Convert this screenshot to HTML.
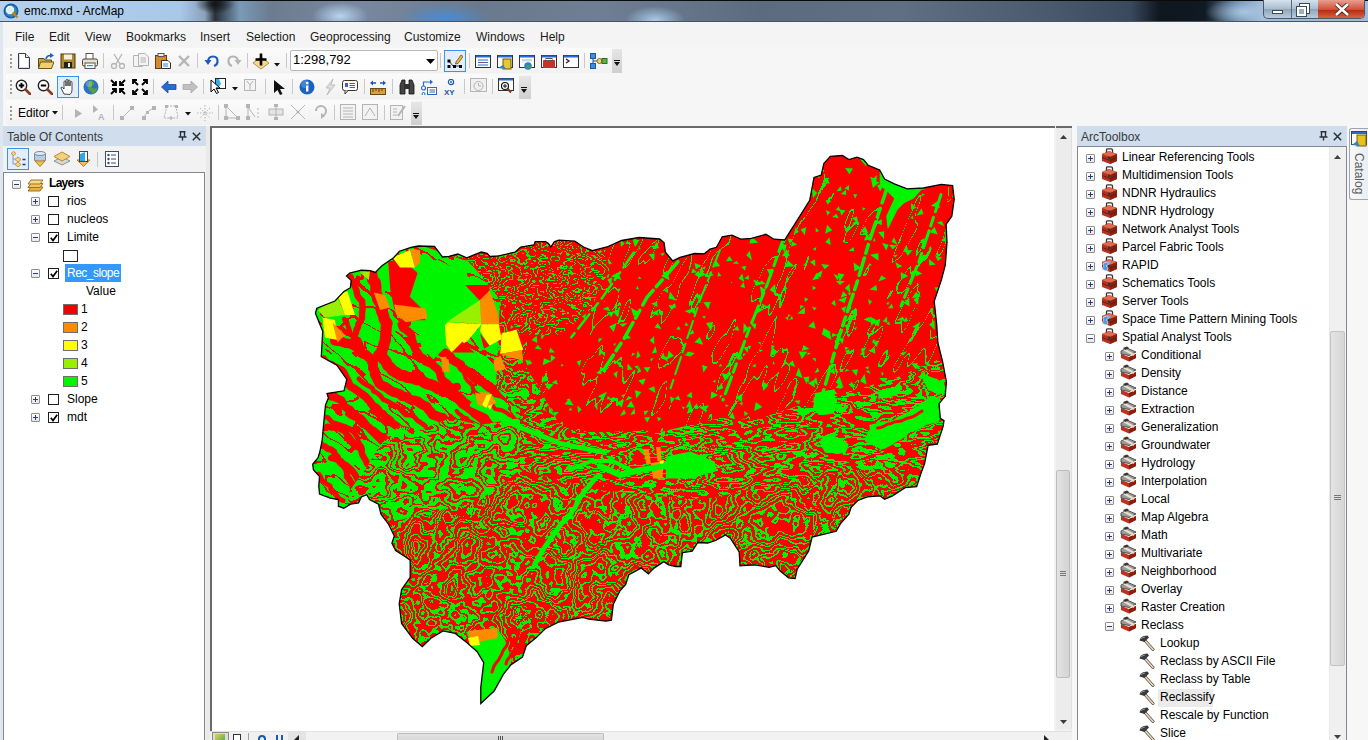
<!DOCTYPE html>
<html><head><meta charset="utf-8">
<style>
*{margin:0;padding:0;box-sizing:border-box}
html,body{width:1368px;height:740px;overflow:hidden}
body{position:relative;background:#f0f0f0;font-family:"Liberation Sans",sans-serif;font-size:12px;color:#000}
.a{position:absolute}
.t{position:absolute;white-space:pre;line-height:14px}
#title{left:0;top:0;width:1368px;height:22px;
background:
radial-gradient(ellipse 40px 14px at 1245px 12px,#a8c4e0 0%,rgba(168,196,224,0) 100%),
radial-gradient(ellipse 28px 14px at 340px 16px,#b8d4ee 0%,rgba(184,212,238,0) 100%),
radial-gradient(ellipse 30px 14px at 655px 20px,#a8c8e8 0%,rgba(168,200,232,0) 100%),
radial-gradient(ellipse 45px 14px at 445px 18px,#4a8ad0 0%,rgba(74,138,208,0) 100%),
radial-gradient(ellipse 20px 10px at 215px 4px,#101418 0%,rgba(16,20,24,0) 100%),
linear-gradient(90deg,#b4d2ee 0px,#a8c8e8 180px,#8aa2bc 205px,#2a3038 215px,#7a9ab8 240px,#6c7c90 270px,#7888a0 360px,#6a7a8e 480px,#6e7e94 600px,#5c6c80 760px,#607084 900px,#4a5a6e 1050px,#3a4a5e 1130px,#0e161e 1160px,#101a24 1205px,#6a8aaa 1240px,#a0bcd8 1262px);}
#title:before{content:"";position:absolute;left:0;top:0;width:1368px;height:1px;background:#0a0a0a}
#title:after{content:"";position:absolute;left:0;top:21px;width:1368px;height:1px;background:#4a5460}
.menu span{position:absolute;top:30px;color:#1a1a1a}
.tb{position:absolute;height:25px;background:linear-gradient(#fbfbfb,#f1f1f1);border-radius:2px}
.grip{position:absolute;left:4px;top:6px;width:2px;height:14px;background:repeating-linear-gradient(#9a9a9a 0 2px,transparent 2px 4px)}
.sep{position:absolute;top:6px;width:1px;height:15px;background:#c8c8c8}
.ov{position:absolute;width:9px;height:22px;background:linear-gradient(#e6e6e6,#cfcfcf)}
.ov:after{content:"";position:absolute;left:2px;top:13px;width:0;height:0;border-left:3px solid transparent;border-right:3px solid transparent;border-top:4px solid #111}
.ov:before{content:"";position:absolute;left:2px;top:11px;width:6px;height:1px;background:#111}
.hdr{position:absolute;height:20px;background:#d0ddec}
.hdr .t{top:4px;color:#3a3a3a}
.row .t{color:#000}
.pm{position:absolute;width:9px;height:9px;border:1px solid #8f8f8f;background:linear-gradient(#fff,#e6e6e6);border-radius:1px}
.pm:before{content:"";position:absolute;left:1px;top:3px;width:5px;height:1px;background:#2a3a7a}
.pm.p:after{content:"";position:absolute;left:3px;top:1px;width:1px;height:5px;background:#2a3a7a}
.cb{position:absolute;width:11px;height:11px;border:1px solid #1e1e1e;background:#fff}
.cb.ck:after{content:"";position:absolute;left:1px;top:0px;width:7px;height:8px;background:none;border:none}
.sw{position:absolute;width:15px;height:11px;border:1px solid #6e6e6e}
</style></head><body>

<!-- title bar -->
<div id="title" class="a">
 <svg class="a" style="left:3px;top:3px" width="17" height="17" viewBox="0 0 17 17">
  <circle cx="8" cy="8" r="7.5" fill="#1c5a9a"/>
  <circle cx="8" cy="8" r="6" fill="#2e86c8"/>
  <path d="M3 5 Q6 3 8 6 Q10 9 13 7 L13 11 Q9 13 6 10 Z" fill="#3aa04a"/>
  <circle cx="7" cy="7" r="3.6" fill="#d8eefc" stroke="#f4f4f4" stroke-width="1.2"/>
  <line x1="9.6" y1="9.6" x2="14.5" y2="14.5" stroke="#d0782a" stroke-width="2.2"/>
 </svg>
 <span class="t" style="left:24px;top:4px;color:#000">emc.mxd - ArcMap</span>
 <!-- window buttons -->
 <div class="a" style="left:1263px;top:0;width:102px;height:19px;border:1px solid #4a5868;border-top:none;border-radius:0 0 5px 5px;overflow:hidden;background:linear-gradient(#d6e2ee,#a8bccc 50%,#8ea4b8 51%,#b8ccdc)">
  <div class="a" style="left:27px;top:0;width:1px;height:19px;background:#5a6a7a"></div>
  <div class="a" style="left:54px;top:0;width:47px;height:19px;background:linear-gradient(#e8a090,#d0503a 50%,#b8280e 51%,#d86a4a)"></div>
  <div class="a" style="left:8px;top:10px;width:11px;height:4px;background:#fff;border:1px solid #3a4a5a"></div>
  <div class="a" style="left:36px;top:4px;width:9px;height:9px;border:2px solid #fff;outline:1px solid #3a4a5a"></div>
  <div class="a" style="left:33px;top:7px;width:9px;height:9px;border:2px solid #fff;outline:1px solid #3a4a5a;background:#9ab0c4"></div>
  <svg class="a" style="left:70px;top:3px" width="16" height="13" viewBox="0 0 16 13"><path d="M2 1 L14 12 M14 1 L2 12" stroke="#3a2018" stroke-width="4.2"/><path d="M2 1 L14 12 M14 1 L2 12" stroke="#fff" stroke-width="2.6"/></svg>
 </div>
</div>

<!-- left window border -->
<div class="a" style="left:0;top:22px;width:3px;height:718px;background:#dfe6ee"></div>

<!-- menu bar -->
<div class="a menu" style="left:3px;top:22px;width:1365px;height:25px;background:#f4f4f4"></div>
<div class="menu">
 <span style="left:15px">File</span><span style="left:49px">Edit</span><span style="left:85px">View</span><span style="left:126px">Bookmarks</span><span style="left:200px">Insert</span><span style="left:246px">Selection</span><span style="left:310px">Geoprocessing</span><span style="left:404px">Customize</span><span style="left:476px">Windows</span><span style="left:540px">Help</span>
</div>

<!-- toolbar area background -->
<div class="a" style="left:3px;top:47px;width:1365px;height:79px;background:#f6f6f6"></div>

<!-- TOOLBARS_START -->
<div class="tb" style="left:6px;top:48px;width:607px"><div class="grip"></div></div>
<div class="ov" style="left:612px;top:49px;width:10px;height:24px"></div>
<svg class="a" style="left:16px;top:53px" width="16" height="16" viewBox="0 0 16 16"><path d="M2.5 0.5H9.5L13.5 4.5V15.5H2.5Z" fill="#fff" stroke="#3c3c3c"/><path d="M3.5 2 V14.5 H12.5 V6" fill="none" stroke="#cfe0f0"/><path d="M9.5 0.5V4.5H13.5" fill="#e8e8e8" stroke="#3c3c3c"/></svg>
<svg class="a" style="left:38px;top:53px" width="16" height="16" viewBox="0 0 16 16"><path d="M0.5 5.5H6L7 7H13.5V15.5H0.5Z" fill="#c9a640" stroke="#5a4a10"/><path d="M2.5 9H16L13.5 15.5H0.5Z" fill="#f0d070" stroke="#6a5a10"/><path d="M8 6 Q9 2 13 2.5" fill="none" stroke="#1a60c0" stroke-width="1.6"/><path d="M12 0L16 2.6L12 5Z" fill="#1a60c0"/></svg>
<svg class="a" style="left:60px;top:53px" width="16" height="16" viewBox="0 0 16 16"><rect x="1" y="1" width="14" height="14" fill="#b08a2a" stroke="#4a3a10"/><rect x="4" y="1.5" width="8" height="5" fill="#f4f0e0"/><rect x="4" y="9" width="8" height="6" fill="#222"/><rect x="8" y="10" width="2" height="4" fill="#eee"/></svg>
<svg class="a" style="left:82px;top:53px" width="16" height="16" viewBox="0 0 16 16"><rect x="4" y="0.5" width="7" height="6" fill="#fff" stroke="#555"/><rect x="0.5" y="6" width="15" height="7" rx="1.5" fill="#e8e0d0" stroke="#4a4030"/><rect x="3" y="10" width="10" height="5.5" fill="#fff" stroke="#555"/><rect x="5" y="12" width="6" height="1.2" fill="#3a8ae0"/></svg>
<div class="sep" style="left:103px;top:53px"></div>
<svg class="a" style="left:110px;top:53px" width="16" height="16" viewBox="0 0 16 16"><circle cx="4" cy="13" r="2.5" fill="none" stroke="#b4b4b4" stroke-width="1.3"/><circle cx="12" cy="13" r="2.5" fill="none" stroke="#b4b4b4" stroke-width="1.3"/><path d="M4 1L10 11M12 1L6 11" stroke="#b4b4b4" stroke-width="1.3"/></svg>
<svg class="a" style="left:133px;top:53px" width="16" height="16" viewBox="0 0 16 16"><path d="M0.5 2.5H7L9.5 5V13.5H0.5Z" fill="#f4f4f4" stroke="#b4b4b4"/><path d="M5.5 0.5H12L15.5 4V12.5H5.5Z" fill="#f4f4f4" stroke="#b4b4b4"/><path d="M7.5 5H13M7.5 7H13M7.5 9H13" stroke="#b4b4b4"/></svg>
<svg class="a" style="left:155px;top:53px" width="16" height="16" viewBox="0 0 16 16"><rect x="0.5" y="2.5" width="11" height="13" fill="#d48a30" stroke="#6a3a10"/><rect x="3" y="0.5" width="6" height="3" fill="#eee" stroke="#555"/><path d="M6.5 7.5H13L15.5 10V15.5H6.5Z" fill="#fff" stroke="#333"/><path d="M8 11H13M8 13H13" stroke="#3a80d0"/></svg>
<svg class="a" style="left:176px;top:53px" width="16" height="16" viewBox="0 0 16 16"><path d="M3 3L13 13M13 3L3 13" stroke="#b4b4b4" stroke-width="2.4"/></svg>
<div class="sep" style="left:197px;top:53px"></div>
<svg class="a" style="left:204px;top:53px" width="16" height="16" viewBox="0 0 16 16"><path d="M4 9 Q4 3.5 9 3.5 Q14 3.5 13.5 9 Q13 12 10 13" fill="none" stroke="#1c5cb8" stroke-width="2.2"/><path d="M0.5 7H7.5L4 12Z" fill="#1c5cb8"/></svg>
<svg class="a" style="left:226px;top:53px" width="16" height="16" viewBox="0 0 16 16"><path d="M12 9 Q12 3.5 7 3.5 Q2 3.5 2.5 9 Q3 12 6 13" fill="none" stroke="#b4b4b4" stroke-width="2.2"/><path d="M15.5 7H8.5L12 12Z" fill="#b4b4b4"/></svg>
<div class="sep" style="left:247px;top:53px"></div>
<svg class="a" style="left:253px;top:53px" width="16" height="17" viewBox="0 0 16 17"><path d="M8 4L16 10L8 16L0 10Z" fill="#f6d890" stroke="#c09040"/><path d="M8 0.5V12.5M2.5 6.5H13.5" stroke="#000" stroke-width="2.6"/></svg>
<svg class="a" style="left:274px;top:63px" width="6" height="4" viewBox="0 0 6 4"><path d="M0 0H6L3 3.5Z" fill="#111"/></svg>
<div class="sep" style="left:286px;top:53px"></div>
<div class="a" style="left:290px;top:50px;width:148px;height:21px;background:#fff;border:1px solid #b8b8b8;border-radius:2px"></div>
<span class="t" style="left:293px;top:53px;font-size:13px;color:#000">1:298,792</span>
<svg class="a" style="left:426px;top:59px" width="9" height="5" viewBox="0 0 9 5"><path d="M0 0H9L4.5 5Z" fill="#000"/></svg>
<div class="sep" style="left:440px;top:53px"></div>
<div class="a" style="left:444px;top:50px;width:22px;height:22px;background:#e2eefb;border:1px solid #3a94ee"></div>
<svg class="a" style="left:447px;top:53px" width="16" height="16" viewBox="0 0 16 16"><path d="M2 8L6 13H13" fill="none" stroke="#333" stroke-width="1"/><rect x="0.5" y="6.5" width="3" height="3" fill="#000"/><rect x="0.5" y="12" width="3" height="3" fill="#000"/><rect x="6" y="12" width="3" height="3" fill="#000"/><rect x="12" y="12" width="3" height="3" fill="#000"/><path d="M9 9L14 2L16 3.5L11 10.5L8.5 11Z" fill="#f0b840" stroke="#6a4a10" stroke-width="0.8"/></svg>
<div class="sep" style="left:469px;top:53px"></div>
<svg class="a" style="left:475px;top:54px" width="16" height="16" viewBox="0 0 16 16"><rect x="0.5" y="1.5" width="15" height="12" fill="#fff" stroke="#333"/><rect x="1" y="1.5" width="14" height="2" fill="#2a6ad0"/><path d="M3 6H13M3 8.5H13M3 11H13" stroke="#2a6ad0"/><path d="M6 8.5H8" stroke="#e03020"/></svg>
<svg class="a" style="left:497px;top:54px" width="16" height="16" viewBox="0 0 16 16"><rect x="0.5" y="1.5" width="15" height="12" fill="#fff" stroke="#333"/><rect x="1" y="1.5" width="14" height="2" fill="#2a6ad0"/><rect x="6" y="5" width="8" height="10" fill="#e8c830" stroke="#6a5a10"/><path d="M1 14L6 11L9 15Z" fill="#3a80c0"/></svg>
<svg class="a" style="left:519px;top:54px" width="16" height="16" viewBox="0 0 16 16"><rect x="0.5" y="1.5" width="15" height="12" fill="#fff" stroke="#333"/><rect x="1" y="1.5" width="14" height="2" fill="#2a6ad0"/><rect x="3" y="5" width="10" height="2.5" fill="#c8d8e8"/><circle cx="9" cy="12" r="3.8" fill="#2a80d0"/><path d="M7 10Q9 12 11 11L12 14Q9 15 7 13Z" fill="#4aa040"/></svg>
<svg class="a" style="left:541px;top:54px" width="16" height="16" viewBox="0 0 16 16"><rect x="0.5" y="1.5" width="15" height="12" fill="#fff" stroke="#333"/><rect x="1" y="1.5" width="14" height="2" fill="#2a6ad0"/><rect x="2" y="6" width="12" height="8" rx="1" fill="#c8302a"/><rect x="5" y="4.5" width="6" height="2" fill="none" stroke="#555"/></svg>
<svg class="a" style="left:563px;top:54px" width="16" height="16" viewBox="0 0 16 16"><rect x="0.5" y="1.5" width="15" height="12" fill="#fff" stroke="#333"/><rect x="1" y="1.5" width="14" height="2" fill="#2a6ad0"/><path d="M3 5L6 7L3 9" fill="none" stroke="#222" stroke-width="1.3"/></svg>
<div class="sep" style="left:584px;top:53px"></div>
<svg class="a" style="left:590px;top:53px" width="18" height="16" viewBox="0 0 18 16"><rect x="0.5" y="0.5" width="5" height="5" fill="#3a90e0" stroke="#1a5aa0"/><rect x="0.5" y="10.5" width="5" height="5" fill="#3a90e0" stroke="#1a5aa0"/><path d="M3 5.5V8H8M3 10.5V8" stroke="#1a5aa0" fill="none"/><circle cx="9.5" cy="8" r="2.5" fill="#f0d070" stroke="#8a6a20"/><rect x="12" y="5.5" width="5" height="5" fill="#60b040" stroke="#2a7020"/></svg>
<div class="tb" style="left:6px;top:74px;width:514px"><div class="grip"></div></div>
<div class="ov" style="left:519px;top:76px;width:12px;height:23px"></div>
<svg class="a" style="left:15px;top:79px" width="16" height="16" viewBox="0 0 16 16"><circle cx="6.5" cy="6.5" r="5.2" fill="#fff" stroke="#222" stroke-width="1.4"/><path d="M10.5 10.5L15 15" stroke="#8a3a20" stroke-width="2.6" stroke-linecap="round"/><path d="M3.8 6.5H9.2" stroke="#000" stroke-width="2"/><path d="M6.5 3.8V9.2" stroke="#000" stroke-width="2"/></svg>
<svg class="a" style="left:37px;top:79px" width="16" height="16" viewBox="0 0 16 16"><circle cx="6.5" cy="6.5" r="5.2" fill="#fff" stroke="#222" stroke-width="1.4"/><path d="M10.5 10.5L15 15" stroke="#8a3a20" stroke-width="2.6" stroke-linecap="round"/><path d="M3.8 6.5H9.2" stroke="#000" stroke-width="2"/></svg>
<div class="a" style="left:57px;top:76px;width:22px;height:22px;background:#e2eefb;border:1px solid #3a94ee"></div>
<svg class="a" style="left:60px;top:79px" width="16" height="16" viewBox="0 0 16 16"><path d="M4 15 L1 9 Q1 7.5 2.5 8.5 L4 10 V3 Q4 2 5 2 Q6 2 6 3 V7 V1.5 Q6 0.5 7 0.5 Q8 0.5 8 1.5 V7 V2 Q8 1 9 1 Q10 1 10 2 V7 V3.5 Q10 2.5 11 2.5 Q12 2.5 12 3.5 V11 Q12 14 10 15.5Z" fill="#fff" stroke="#333" stroke-width="0.9"/></svg>
<svg class="a" style="left:83px;top:79px" width="16" height="16" viewBox="0 0 16 16"><circle cx="8" cy="8" r="7.5" fill="#2a72c8"/><path d="M8 1Q12 3 11 6Q8 6 9 9Q12 10 14 9Q14 13 10 15Q8 12 6 11Q4 8 6 6Q5 3 8 1Z" fill="#5aa040"/><circle cx="6" cy="5" r="3" fill="#fff" opacity="0.25"/></svg>
<div class="sep" style="left:103px;top:79px"></div>
<svg class="a" style="left:110px;top:79px" width="16" height="16" viewBox="0 0 16 16"><path d="M1 1L6 6M6 2V6H2M15 1L10 6M10 2V6H14M1 15L6 10M6 14V10H2M15 15L10 10M10 14V10H14" stroke="#000" stroke-width="1.8" fill="none"/></svg>
<svg class="a" style="left:132px;top:79px" width="16" height="16" viewBox="0 0 16 16"><path d="M1 1L6 6M1 5V1H5M15 1L10 6M15 5V1H11M1 15L6 10M1 11V15H5M15 15L10 10M15 11V15H11" stroke="#000" stroke-width="1.8" fill="none"/></svg>
<div class="sep" style="left:153px;top:79px"></div>
<svg class="a" style="left:161px;top:79px" width="16" height="16" viewBox="0 0 16 16"><path d="M0.5 8L7 2V5.5H15V10.5H7V14Z" fill="#2a6ad0" stroke="#1a4a9a" stroke-width="0.8"/></svg>
<svg class="a" style="left:182px;top:79px" width="16" height="16" viewBox="0 0 16 16"><path d="M15.5 8L9 2V5.5H1V10.5H9V14Z" fill="#c0c0c0" stroke="#a8a8a8" stroke-width="0.8"/></svg>
<div class="sep" style="left:203px;top:79px"></div>
<svg class="a" style="left:210px;top:78px" width="16" height="17" viewBox="0 0 16 17"><rect x="5.5" y="0.5" width="10" height="10" fill="#fff" stroke="#222"/><path d="M6 1H9L11 6L8 10H6Z" fill="#30b0f0"/><path d="M1 2L1 14L4 11L6.5 15.5L8.5 14.5L6 10H10Z" fill="#fff" stroke="#000"/></svg>
<svg class="a" style="left:232px;top:87px" width="6" height="4" viewBox="0 0 6 4"><path d="M0 0H6L3 3.5Z" fill="#111"/></svg>
<svg class="a" style="left:243px;top:78px" width="16" height="16" viewBox="0 0 16 16"><rect x="1.5" y="1.5" width="11" height="11" fill="#f4f4f4" stroke="#b4b4b4"/><path d="M4 3L7 7L10 3M7 7V12" fill="none" stroke="#b4b4b4"/></svg>
<div class="sep" style="left:265px;top:79px"></div>
<svg class="a" style="left:272px;top:79px" width="16" height="16" viewBox="0 0 16 16"><path d="M2 1L2 14L5.5 11L8 16L10.5 15L8 10H13Z" fill="#111"/></svg>
<div class="sep" style="left:292px;top:79px"></div>
<svg class="a" style="left:299px;top:79px" width="16" height="16" viewBox="0 0 16 16"><circle cx="8" cy="8" r="7.5" fill="#1e62c0"/><circle cx="6" cy="5" r="4" fill="#5a9ae8" opacity="0.6"/><rect x="7" y="6.5" width="2.4" height="6" fill="#fff"/><circle cx="8.2" cy="4" r="1.3" fill="#fff"/></svg>
<svg class="a" style="left:322px;top:79px" width="16" height="16" viewBox="0 0 16 16"><path d="M11 0L4 9H8L5 16L13 6H9Z" fill="#e0e0e0" stroke="#b4b4b4" stroke-width="0.8"/></svg>
<svg class="a" style="left:342px;top:79px" width="16" height="16" viewBox="0 0 16 16"><rect x="0.5" y="1.5" width="15" height="10" rx="2" fill="#fff" stroke="#333"/><path d="M3 11.5L3 15L6 11.5" fill="#fff" stroke="#333"/><rect x="3" y="4" width="3" height="4" fill="#2a6ad0"/><path d="M7.5 4.5H13M7.5 6.5H13M7.5 8.5H13" stroke="#2a6ad0"/></svg>
<div class="sep" style="left:364px;top:79px"></div>
<svg class="a" style="left:370px;top:79px" width="16" height="16" viewBox="0 0 16 16"><rect x="0.5" y="9.5" width="15" height="6" fill="#d8a040" stroke="#6a4a10"/><path d="M3 10V13M6 10V12M9 10V13M12 10V12" stroke="#5a3a10"/><path d="M1 4H6M10 4H15" stroke="#1a5ab0" stroke-width="1.6"/><path d="M0 4L3 1.5V6.5Z M16 4L13 1.5V6.5Z" fill="#1a5ab0"/></svg>
<div class="sep" style="left:392px;top:79px"></div>
<svg class="a" style="left:399px;top:79px" width="16" height="16" viewBox="0 0 16 16"><path d="M1 15V6L3 1H6V15Z M10 15V1H13L15 6V15Z" fill="#444" stroke="#111" stroke-width="0.8"/><rect x="6" y="5" width="4" height="5" fill="#333"/></svg>
<svg class="a" style="left:421px;top:79px" width="16" height="16" viewBox="0 0 16 16"><circle cx="2.5" cy="9" r="2" fill="#fff" stroke="#2a6ad0" stroke-width="1.2"/><circle cx="2.5" cy="15" r="1.5" fill="#fff" stroke="#2a6ad0"/><path d="M2.5 7V3H9" fill="none" stroke="#2a6ad0" stroke-width="1.2"/><path d="M9 0.5L12 3L9 5.5Z" fill="#2a6ad0"/><rect x="6.5" y="8.5" width="9" height="7" fill="#fff" stroke="#2a6ad0"/><path d="M8.5 11H14M8.5 13H14" stroke="#2a6ad0"/></svg>
<svg class="a" style="left:444px;top:79px" width="16" height="16" viewBox="0 0 16 16"><circle cx="7" cy="3" r="2.6" fill="none" stroke="#1a5ab0" stroke-width="1.2"/><circle cx="7" cy="3" r="0.9" fill="#1a5ab0"/><text x="0" y="15.5" font-family="Liberation Sans" font-weight="bold" font-size="8" fill="#1a5ab0">XY</text></svg>
<div class="sep" style="left:464px;top:79px"></div>
<svg class="a" style="left:470px;top:78px" width="17" height="16" viewBox="0 0 17 16"><rect x="0.5" y="0.5" width="16" height="13" fill="#f0f0f0" stroke="#b4b4b4"/><circle cx="8.5" cy="8" r="4.5" fill="none" stroke="#b4b4b4"/><path d="M8.5 5V8H11" stroke="#b4b4b4" fill="none"/></svg>
<div class="sep" style="left:492px;top:79px"></div>
<svg class="a" style="left:498px;top:78px" width="16" height="16" viewBox="0 0 16 16"><rect x="0.5" y="0.5" width="15" height="12" fill="#fff" stroke="#333"/><rect x="1" y="0.5" width="14" height="2" fill="#2a6ad0"/><circle cx="7" cy="8" r="3.5" fill="#fff" stroke="#111" stroke-width="1.2"/><path d="M5 8H9M7 6V10" stroke="#111"/><path d="M9.5 10.5L13 14.5" stroke="#8a3a20" stroke-width="2"/></svg>
<div class="tb" style="left:6px;top:100px;width:406px"><div class="grip"></div></div>
<div class="ov" style="left:411px;top:102px;width:11px;height:23px"></div>
<span class="t" style="left:18px;top:106px;color:#000">Editor</span>
<svg class="a" style="left:52px;top:111px" width="6" height="4" viewBox="0 0 6 4"><path d="M0 0H6L3 3.5Z" fill="#111"/></svg>
<div class="sep" style="left:62px;top:105px"></div>
<svg class="a" style="left:72px;top:105px" width="16" height="16" viewBox="0 0 16 16"><path d="M3 4V13L10 8.5Z" fill="#b4b4b4"/></svg>
<svg class="a" style="left:91px;top:104px" width="16" height="16" viewBox="0 0 16 16"><path d="M2 1V9L7 5.5Z" fill="#b4b4b4"/><text x="7" y="16" font-family="Liberation Sans" font-size="9" font-weight="bold" fill="#b4b4b4">A</text></svg>
<div class="sep" style="left:113px;top:105px"></div>
<svg class="a" style="left:119px;top:105px" width="16" height="16" viewBox="0 0 16 16"><path d="M3 13L13 3" stroke="#b4b4b4"/><rect x="1" y="11" width="4" height="4" fill="#b4b4b4"/><rect x="11" y="1" width="4" height="4" fill="#b4b4b4"/></svg>
<svg class="a" style="left:141px;top:105px" width="16" height="16" viewBox="0 0 16 16"><path d="M3 13Q5 6 13 3" stroke="#b4b4b4" fill="none"/><rect x="1" y="11" width="4" height="4" fill="#b4b4b4"/><rect x="11" y="1" width="4" height="4" fill="#b4b4b4"/><rect x="5" y="6" width="3" height="3" fill="#b4b4b4"/></svg>
<svg class="a" style="left:163px;top:104px" width="16" height="16" viewBox="0 0 16 16"><path d="M4 2H13L15 14H1Z" fill="none" stroke="#b4b4b4" stroke-dasharray="2 1"/><rect x="2" y="1" width="3" height="3" fill="#b4b4b4"/><rect x="12" y="1" width="3" height="3" fill="#b4b4b4"/><path d="M8 12V16M6 14H10" stroke="#b4b4b4"/></svg>
<svg class="a" style="left:185px;top:112px" width="6" height="4" viewBox="0 0 6 4"><path d="M0 0H6L3 3.5Z" fill="#111"/></svg>
<svg class="a" style="left:197px;top:105px" width="16" height="16" viewBox="0 0 16 16"><path d="M8 0V16M0 8H16M3 3L13 13M13 3L3 13" stroke="#b4b4b4" stroke-dasharray="1.5 1.5"/></svg>
<div class="sep" style="left:218px;top:105px"></div>
<svg class="a" style="left:224px;top:104px" width="16" height="16" viewBox="0 0 16 16"><path d="M2 2L14 14H2Z" fill="none" stroke="#b4b4b4"/><rect x="0" y="0" width="4" height="4" fill="#b4b4b4"/><rect x="12" y="12" width="4" height="4" fill="#b4b4b4"/><rect x="0" y="12" width="4" height="4" fill="#b4b4b4"/></svg>
<svg class="a" style="left:246px;top:104px" width="16" height="16" viewBox="0 0 16 16"><path d="M2 1V15M2 3L9 13" fill="none" stroke="#b4b4b4"/><rect x="0" y="0" width="4" height="4" fill="#b4b4b4"/><rect x="0" y="12" width="4" height="4" fill="#b4b4b4"/><path d="M12 4V16" stroke="#b4b4b4" stroke-dasharray="2 2"/></svg>
<svg class="a" style="left:268px;top:104px" width="16" height="16" viewBox="0 0 16 16"><rect x="1" y="5" width="14" height="6" fill="#e4e4e4" stroke="#b4b4b4"/><path d="M8 0V16" stroke="#b4b4b4"/><rect x="6" y="0" width="4" height="3" fill="#b4b4b4"/><rect x="6" y="13" width="4" height="3" fill="#b4b4b4"/></svg>
<svg class="a" style="left:290px;top:104px" width="16" height="16" viewBox="0 0 16 16"><path d="M1 1L15 15M15 1L1 15" stroke="#b4b4b4"/><circle cx="8" cy="8" r="1.5" fill="#b4b4b4"/></svg>
<svg class="a" style="left:313px;top:104px" width="16" height="16" viewBox="0 0 16 16"><path d="M3 7A5 5 0 1 1 8 12" fill="none" stroke="#b4b4b4" stroke-width="2"/><path d="M8 9V15L12 12Z" fill="#b4b4b4"/></svg>
<div class="sep" style="left:334px;top:105px"></div>
<svg class="a" style="left:340px;top:104px" width="16" height="16" viewBox="0 0 16 16"><rect x="0.5" y="0.5" width="15" height="15" fill="#f2f2f2" stroke="#b4b4b4"/><path d="M3 4H13M3 7H13M3 10H13M3 13H13" stroke="#b4b4b4"/></svg>
<svg class="a" style="left:362px;top:104px" width="16" height="16" viewBox="0 0 16 16"><rect x="0.5" y="0.5" width="15" height="15" fill="#f2f2f2" stroke="#b4b4b4"/><path d="M3 12L8 4L13 12" fill="none" stroke="#b4b4b4"/></svg>
<div class="sep" style="left:384px;top:105px"></div>
<svg class="a" style="left:390px;top:104px" width="16" height="16" viewBox="0 0 16 16"><rect x="0.5" y="1.5" width="12" height="14" fill="#f2f2f2" stroke="#b4b4b4"/><path d="M3 5H7M3 8H7M3 11H7" stroke="#b4b4b4"/><path d="M8 12L15 2" stroke="#b4b4b4" stroke-width="2"/></svg>
<!-- TOOLBARS_END -->

<!-- TOC panel -->
<div class="hdr" style="left:3px;top:126px;width:203px"><span class="t" style="left:4px">Table Of Contents</span></div>
<div class="a" style="left:3px;top:146px;width:203px;height:26px;background:#f2f2f2"></div>
<div class="a" style="left:3px;top:172px;width:202px;height:568px;background:#fff;border:1px solid #828790;border-bottom:none"></div>
<div class="a" style="left:206px;top:126px;width:4px;height:614px;background:#eaeaea"></div>

<!-- TOC_START -->
<!-- TOC toolbar -->
<div class="a" style="left:7px;top:148px;width:22px;height:22px;background:#e2eefb;border:1px solid #3a94ee"></div>
<svg class="a" style="left:10px;top:151px" width="17" height="16" viewBox="0 0 17 16"><path d="M3 4V13H6M3 8H6" fill="none" stroke="#8a9ab0"/><path d="M3.5 0.5L6 2.5L3.5 4.5L1 2.5Z" fill="#f4d48a" stroke="#c8983a"/><path d="M8 6L11 8.5L8 11L5 8.5Z" fill="#f4d48a" stroke="#c8983a"/><path d="M8 11L11 13.5L8 16L5 13.5Z" fill="#f4d48a" stroke="#c8983a"/><path d="M12.5 8.5H15.5M12.5 13.5H15.5" stroke="#1a3a8a" stroke-width="1.5"/></svg>
<svg class="a" style="left:33px;top:151px" width="14" height="16" viewBox="0 0 14 16"><path d="M1.5 2.5V9.5Q7 12 12.5 9.5V2.5" fill="#b8cce0" stroke="#7a8aa0"/><ellipse cx="7" cy="2.5" rx="5.5" ry="2" fill="#dce8f4" stroke="#7a8aa0"/><path d="M2 10H12L7 15.5Z" fill="#f0c050" stroke="#b08020"/></svg>
<svg class="a" style="left:53px;top:151px" width="18" height="16" viewBox="0 0 18 16"><path d="M9 6L17 10L9 14L1 10Z" fill="#d8d8d8" stroke="#909090"/><path d="M9 1L17 5.5L9 10L1 5.5Z" fill="#f4d080" stroke="#b88a30"/></svg>
<svg class="a" style="left:75px;top:151px" width="17" height="16" viewBox="0 0 17 16"><path d="M2 9H15L8.5 15.5Z" fill="#f0c050" stroke="#b08020"/><rect x="4.5" y="0.5" width="8" height="10" fill="#fff" stroke="#444"/><path d="M5 3L10 1V10H5Z" fill="#30a8e8"/></svg>
<div class="a" style="left:97px;top:152px;width:1px;height:15px;background:#c8c8c8"></div>
<svg class="a" style="left:105px;top:151px" width="14" height="16" viewBox="0 0 14 16"><rect x="0.5" y="0.5" width="13" height="15" fill="#fff" stroke="#3a4a6a"/><circle cx="3.5" cy="4" r="1.2" fill="#3a4a6a"/><circle cx="3.5" cy="8" r="1.2" fill="#3a4a6a"/><circle cx="3.5" cy="12" r="1.2" fill="#3a4a6a"/><path d="M6 4H11M6 8H11M6 12H11" stroke="#3a4a6a"/></svg>
<!-- tree -->
<div class="pm" style="left:12px;top:180px"></div>
<svg class="a" style="left:27px;top:178px" width="17" height="14" viewBox="0 0 17 14"><path d="M4 9H16L13 13H1Z" fill="#e8b040" stroke="#a07020"/><path d="M4 5.5H16L13 9.5H1Z" fill="#f0c860" stroke="#a07020"/><path d="M4 2H16L13 6H1Z" fill="#f4d890" stroke="#a07020"/></svg>
<span class="t" style="left:49px;top:176px;font-weight:bold;letter-spacing:-0.7px">Layers</span>
<div class="pm p" style="left:31px;top:197px"></div><div class="cb" style="left:48px;top:196px"></div><span class="t" style="left:67px;top:194px">rios</span>
<div class="pm p" style="left:31px;top:215px"></div><div class="cb" style="left:48px;top:214px"></div><span class="t" style="left:67px;top:212px">nucleos</span>
<div class="pm" style="left:31px;top:233px"></div><div class="cb ck" style="left:48px;top:232px"><svg class="a" style="left:1px;top:1px" width="8" height="8" viewBox="0 0 8 8"><path d="M0.8 3.8L3 6.5L7.2 0.8" fill="none" stroke="#000" stroke-width="1.7"/></svg></div><span class="t" style="left:67px;top:230px">Limite</span>
<div class="a" style="left:63px;top:250px;width:15px;height:12px;border:1px solid #222;background:#fff"></div>
<div class="pm" style="left:31px;top:269px"></div><div class="cb ck" style="left:48px;top:268px"><svg class="a" style="left:1px;top:1px" width="8" height="8" viewBox="0 0 8 8"><path d="M0.8 3.8L3 6.5L7.2 0.8" fill="none" stroke="#000" stroke-width="1.7"/></svg></div>
<div class="a" style="left:65px;top:264px;width:56px;height:18px;background:#3399ff"></div><span class="t" style="left:67px;top:266px;color:#fff;letter-spacing:-0.5px">Rec_slope</span>
<span class="t" style="left:86px;top:284px">Value</span>
<div class="sw" style="left:63px;top:304px;background:#f40000"></div><span class="t" style="left:81px;top:302px">1</span>
<div class="sw" style="left:63px;top:322px;background:#ff8a00"></div><span class="t" style="left:81px;top:320px">2</span>
<div class="sw" style="left:63px;top:340px;background:#ffff00"></div><span class="t" style="left:81px;top:338px">3</span>
<div class="sw" style="left:63px;top:358px;background:#96f000"></div><span class="t" style="left:81px;top:356px">4</span>
<div class="sw" style="left:63px;top:376px;background:#00f500"></div><span class="t" style="left:81px;top:374px">5</span>
<div class="pm p" style="left:31px;top:395px"></div><div class="cb" style="left:48px;top:394px"></div><span class="t" style="left:67px;top:392px">Slope</span>
<div class="pm p" style="left:31px;top:413px"></div><div class="cb ck" style="left:48px;top:412px"><svg class="a" style="left:1px;top:1px" width="8" height="8" viewBox="0 0 8 8"><path d="M0.8 3.8L3 6.5L7.2 0.8" fill="none" stroke="#000" stroke-width="1.7"/></svg></div><span class="t" style="left:67px;top:410px">mdt</span>

<!-- TOC_END -->
<!-- map -->
<div class="a" style="left:210px;top:126px;width:845px;height:605px;background:#fff;border-left:2px solid #6a6a6a;border-top:2px solid #6a6a6a"></div>
<!-- MAP_START -->
<svg class="a" style="left:0;top:0" width="1368" height="740" viewBox="0 0 1368 740">
<defs>
<clipPath id="bd"><path d="M315.4 313.3 L316.8 308.2 L335.0 301.0 L343.9 291.4 L350.4 287.7 L351.2 280.4 L346.5 276.0 L349.7 273.0 L361.4 270.2 L370.2 270.6 L375.3 272.4 L381.9 265.8 L393.6 257.8 L399.4 251.2 L411.0 247.5 L418.4 246.0 L434.5 246.4 L442.5 257.0 L449.0 256.3 L457.9 254.0 L466.7 257.8 L481.3 252.0 L487.0 253.4 L490.0 256.5 L498.8 255.8 L514.9 252.2 L520.7 247.0 L533.9 244.9 L535.3 241.6 L545.6 241.6 L548.5 243.4 L550.7 247.0 L554.3 241.9 L558.7 240.2 L574.8 241.2 L583.6 247.0 L592.3 250.7 L607.0 247.0 L621.6 240.5 L639.1 237.5 L659.6 239.0 L664.0 242.7 L665.4 252.2 L672.7 260.9 L680.0 257.3 L694.6 253.5 L704.3 253.8 L710.0 249.2 L716.5 247.3 L722.2 236.8 L731.9 235.1 L740.8 239.2 L751.3 238.4 L765.9 234.3 L774.0 239.2 L784.6 240.0 L793.5 226.2 L809.7 200.3 L814.0 177.4 L821.3 175.0 L823.8 163.6 L830.3 156.3 L842.4 155.5 L848.9 159.6 L857.0 157.2 L863.5 159.6 L868.3 165.3 L879.7 170.1 L884.6 179.0 L894.3 183.9 L907.2 188.8 L923.5 188.0 L941.3 184.4 L952.6 185.5 L954.2 199.3 L951.8 216.3 L946.1 224.4 L947.0 242.2 L945.3 265.0 L941.5 279.5 L934.2 301.4 L936.6 323.3 L937.9 342.7 L942.7 362.2 L946.4 381.7 L945.2 396.3 L939.0 403.6 L940.3 418.2 L944.0 420.6 L943.0 426.9 L940.7 433.8 L937.3 444.1 L928.1 445.3 L924.6 463.6 L921.2 472.8 L916.6 486.6 L905.1 487.7 L892.5 495.8 L884.5 499.2 L879.9 495.8 L867.2 496.9 L858.1 500.3 L851.2 507.2 L848.9 514.1 L840.8 523.3 L836.2 531.3 L812.1 537.1 L808.7 550.9 L797.2 569.2 L795.1 578.6 L788.6 577.8 L780.5 571.3 L775.7 565.7 L769.2 567.3 L754.6 564.9 L740.0 565.7 L739.2 551.9 L730.3 538.1 L725.4 534.9 L715.7 540.5 L707.6 543.0 L697.8 542.5 L692.2 551.1 L682.4 552.7 L680.8 566.5 L675.9 566.5 L668.6 564.9 L663.8 561.6 L654.0 568.1 L648.4 573.8 L641.1 568.1 L628.9 574.6 L625.7 584.3 L620.0 590.8 L613.3 604.1 L611.4 620.2 L605.8 621.1 L588.7 619.2 L583.0 617.3 L558.4 622.1 L545.2 628.7 L535.7 638.1 L526.3 645.7 L522.5 657.1 L511.1 664.6 L503.5 674.1 L494.1 691.1 L480.8 703.4 L480.8 687.4 L483.7 662.7 L477.0 651.4 L472.3 647.6 L467.4 643.1 L455.2 633.4 L443.0 630.9 L430.9 638.2 L422.3 646.7 L412.6 638.2 L401.6 623.6 L399.2 604.1 L401.6 589.5 L410.2 577.4 L410.2 560.3 L405.3 556.7 L395.6 550.6 L391.9 543.3 L394.3 536.0 L388.3 523.8 L381.0 514.1 L378.5 504.3 L369.5 499.5 L366.8 494.7 L361.4 496.8 L358.6 502.8 L350.5 504.2 L343.8 508.2 L338.4 506.2 L338.4 499.5 L330.3 498.1 L319.5 494.0 L318.8 486.0 L319.5 476.5 L313.4 469.7 L312.7 464.3 L318.1 457.6 L320.1 450.8 L322.2 440.0 L324.1 419.1 L325.5 405.0 L328.4 397.9 L327.0 393.6 L344.0 390.8 L346.8 379.4 L336.9 365.2 L321.3 356.7 L322.7 331.2Z"/></clipPath>
<clipPath id="zw"><path d="M290 230 L420 245 L470 262 L496 280 L500 300 L496 387 L520 418 L480 425 L450 418 L420 430 L400 425 L380 445 L365 470 L350 490 L345 520 L290 520Z"/></clipPath>
<clipPath id="ze"><path d="M420 200 L980 140 L980 357 L940 358 L901 376 L865 387 L813 401 L755 420 L720 418 L690 425 L660 432 L640 430 L610 432 L578 432 L560 425 L540 390 L510 340 L500 300 L496 280 L470 262 L420 245Z"/></clipPath>
<clipPath id="zew"><path d="M440 230 L600 225 L610 270 L590 310 L560 335 L520 335 L500 300 L470 262 L440 250Z"/></clipPath>
<clipPath id="zsw"><path d="M290 380 L540 390 L560 425 L520 470 L480 500 L400 520 L290 520Z"/></clipPath>
<clipPath id="zm"><path d="M520 400 L548 412 L578 430 L640 430 L720 418 L813 401 L940 358 L980 357 L980 470 L850 470 L700 500 L600 490 L520 470Z"/></clipPath>
<filter id="fthin" filterUnits="userSpaceOnUse" x="-1400" y="-1400" width="2800" height="2800" color-interpolation-filters="sRGB">
<feTurbulence type="fractalNoise" baseFrequency="0.02" numOctaves="4" seed="11"/>
<feColorMatrix type="matrix" values="1 0 0 0 0  1 0 0 0 0  0 0 0 0 0  0 0 0 0 1"/>
<feComponentTransfer><feFuncR type="discrete" tableValues="1 0 1 1 0 1 1 0 1 0 1 1 0 1 1 0 1 0 1 1 0 1 1 0 1 0 1 1 0 1 1 0 1 0 1 1 0 1 1 0"/><feFuncG type="discrete" tableValues="0 0.96 0 0 0.96 0 0 0.96 0 0.96 0 0 0.96 0 0 0.96 0 0.96 0 0 0.96 0 0 0.96 0 0.96 0 0 0.96 0 0 0.96 0 0.96 0 0 0.96 0 0 0.96"/><feFuncB type="linear" slope="0" intercept="0"/><feFuncA type="linear" slope="0" intercept="1"/></feComponentTransfer>
</filter>
<filter id="fmid" filterUnits="userSpaceOnUse" x="-1400" y="-1400" width="2800" height="2800" color-interpolation-filters="sRGB">
<feTurbulence type="fractalNoise" baseFrequency="0.012 0.035" numOctaves="4" seed="13"/>
<feColorMatrix type="matrix" values="1 0 0 0 0  1 0 0 0 0  0 0 0 0 0  0 0 0 0 1"/>
<feComponentTransfer><feFuncR type="discrete" tableValues="1 0 1 1 0 1 0 1 1 0 1 0 1 1 0 1 0 1 1 0 1 0 1 1 0 1 0 1 1 0 1 0 1 1 0"/><feFuncG type="discrete" tableValues="0 0.96 0 0 0.96 0 0.96 0 0 0.96 0 0.96 0 0 0.96 0 0.96 0 0 0.96 0 0.96 0 0 0.96 0 0.96 0 0 0.96 0 0.96 0 0 0.96"/><feFuncB type="linear" slope="0" intercept="0"/><feFuncA type="linear" slope="0" intercept="1"/></feComponentTransfer>
</filter>
<filter id="fwest" filterUnits="userSpaceOnUse" x="-1400" y="-1400" width="2800" height="2800" color-interpolation-filters="sRGB">
<feTurbulence type="fractalNoise" baseFrequency="0.01 0.035" numOctaves="3" seed="21"/>
<feColorMatrix type="matrix" values="1 0 0 0 0  1 0 0 0 0  0 0 0 0 0  0 0 0 0 1"/>
<feComponentTransfer><feFuncR type="discrete" tableValues="1 0 0 1 0 0 1 0 0 1 0 0 1 0 0 1 0 0 1 0 0 1 0 0"/><feFuncG type="discrete" tableValues="0 0.96 0.96 0 0.96 0.96 0 0.96 0.96 0 0.96 0.96 0 0.96 0.96 0 0.96 0.96 0 0.96 0.96 0 0.96 0.96"/><feFuncB type="linear" slope="0" intercept="0"/><feFuncA type="linear" slope="0" intercept="1"/></feComponentTransfer>
</filter>
<filter id="fsw" filterUnits="userSpaceOnUse" x="-1400" y="-1400" width="2800" height="2800" color-interpolation-filters="sRGB">
<feTurbulence type="fractalNoise" baseFrequency="0.018 0.026" numOctaves="4" seed="17"/>
<feColorMatrix type="matrix" values="1 0 0 0 0  1 0 0 0 0  0 0 0 0 0  0 0 0 0 1"/>
<feComponentTransfer><feFuncR type="discrete" tableValues="1 0 1 0 0 1 0 1 0 0 1 0 1 0 0 1 0 1 0 0 1 0 1 0 0 1 0 1 0 0"/><feFuncG type="discrete" tableValues="0 0.96 0 0.96 0.96 0 0.96 0 0.96 0.96 0 0.96 0 0.96 0.96 0 0.96 0 0.96 0.96 0 0.96 0 0.96 0.96 0 0.96 0 0.96 0.96"/><feFuncB type="linear" slope="0" intercept="0"/><feFuncA type="linear" slope="0" intercept="1"/></feComponentTransfer>
</filter>
<filter id="fwg" filterUnits="userSpaceOnUse" x="-1400" y="-1400" width="2800" height="2800" color-interpolation-filters="sRGB">
<feTurbulence type="fractalNoise" baseFrequency="0.01 0.03" numOctaves="4" seed="29"/>
<feColorMatrix type="matrix" values="1 0 0 0 0  1 0 0 0 0  0 0 0 0 0  0 0 0 0 1"/>
<feComponentTransfer><feFuncR type="discrete" tableValues="0 0 0 1 0 0 0 0 0 0 1 0 0 0 0 0 0 1 0 0 0 0 0 0 1 0 0 0 0 0 0 1 0 0 0"/><feFuncG type="discrete" tableValues="0.96 0.96 0.96 0 0.96 0.96 0.96 0.96 0.96 0.96 0 0.96 0.96 0.96 0.96 0.96 0.96 0 0.96 0.96 0.96 0.96 0.96 0.96 0 0.96 0.96 0.96 0.96 0.96 0.96 0 0.96 0.96 0.96"/><feFuncB type="linear" slope="0" intercept="0"/><feFuncA type="linear" slope="0" intercept="1"/></feComponentTransfer>
</filter>
<filter id="few" filterUnits="userSpaceOnUse" x="-1400" y="-1400" width="2800" height="2800" color-interpolation-filters="sRGB">
<feTurbulence type="fractalNoise" baseFrequency="0.03 0.05" numOctaves="4" seed="31"/>
<feColorMatrix type="matrix" values="1 0 0 0 0  1 0 0 0 0  0 0 0 0 0  0 0 0 0 1"/>
<feComponentTransfer><feFuncR type="discrete" tableValues="1 0 1 1 1 0 1 1 1 0 1 1 1 0 1 1 1 0 1 1 1 0 1 1 1 0 1 1 1 0 1 1 1 0 1 1 1 0 1 1"/><feFuncG type="discrete" tableValues="0 0.96 0 0 0 0.96 0 0 0 0.96 0 0 0 0.96 0 0 0 0.96 0 0 0 0.96 0 0 0 0.96 0 0 0 0.96 0 0 0 0.96 0 0 0 0.96 0 0"/><feFuncB type="linear" slope="0" intercept="0"/><feFuncA type="linear" slope="0" intercept="1"/></feComponentTransfer>
</filter>
<filter id="fred" filterUnits="userSpaceOnUse" x="-1400" y="-1400" width="2800" height="2800" color-interpolation-filters="sRGB">
<feTurbulence type="fractalNoise" baseFrequency="0.012 0.05" numOctaves="3" seed="3"/>
<feColorMatrix type="matrix" values="1 0 0 0 0  1 0 0 0 0  0 0 0 0 0  0 0 0 0 1"/>
<feComponentTransfer><feFuncR type="discrete" tableValues="1 1 1 1 1 1 1 1 1 1 1 1 1 1 1 0 1 1 1 1 1 1 1 1 1 1 1 1 1 1 1 0 1 1 1 1 1 1 1 1 1 1 1 1 1 1 1 0"/><feFuncG type="discrete" tableValues="0 0 0 0 0 0 0 0 0 0 0 0 0 0 0 0.96 0 0 0 0 0 0 0 0 0 0 0 0 0 0 0 0.96 0 0 0 0 0 0 0 0 0 0 0 0 0 0 0 0.96"/><feFuncB type="linear" slope="0" intercept="0"/><feFuncA type="linear" slope="0" intercept="1"/></feComponentTransfer>
</filter>
</defs>
<g clip-path="url(#bd)">
<rect x="300" y="150" width="670" height="560" fill="#f00" filter="url(#fthin)"/>
<g clip-path="url(#zsw)"><rect x="300" y="150" width="670" height="560" fill="#f00" filter="url(#fsw)"/></g>
<g clip-path="url(#zm)"><rect x="300" y="150" width="670" height="560" fill="#f00" filter="url(#fmid)"/></g>
<g clip-path="url(#zw)"><g transform="rotate(35 420 330)"><rect x="150" y="50" width="560" height="560" fill="#0f0" filter="url(#fwg)"/></g></g>
<path d="M371.6 272.6 L372 276.3 L372.7 279.9 L375.3 282.5 L375.9 286.1 L375.8 289.3 L376 292.7 L377.2 295.9 L377.7 299.2 L379.5 302.2 L381.7 305.1 L381 309.1 L382.1 312.4 L383.6 315.6 L384.2 319.2 L386 322.3 L387.1 323.2 L386.2 326.4 L386.1 330 L385.8 333.5 L385.5 336.9 L385.3 340.4 L384.1 343.6 L383.3 346.9 L382 349.9 L381.6 353.4 L378.8 355.1 L381.5 357.1 L384 359.3 L386.2 361.9 L387.6 365.2 L390.2 367.4 L392.3 370.2 L395.1 371.9 L397.8 373.6 L400.6 375.4 L404.2 375.7 L407.1 377.2 L410.2 377.9 L413.6 377.6 L416.1 379.6 L419.3 379.8 L422.1 380.8 L424.6 382.6 L427.4 383.9 L430.4 384.5 L433.1 385.7 L435.9 387 L438.3 388.9 L441.6 388.9 L444.3 390.2 L447.4 390.6 L450.7 392 L453 394.4 L455.8 396.1 L458.5 398 L460.9 400.4 L463 403.2 L465.9 404.7 L468.5 406.7 L471.1 408.6 L473.7 410.6 L475.9 413.1 L478.6 414.9 L481.2 416.9 L483.8 418.8 L485.4 421.9 L487.4 424.3 L489.6 426.6 L492.1 428.5 L495 429.9 L497.4 432 L499.4 434.4 L503.9 433.9" fill="none" stroke="#ff0000" stroke-width="11.2" stroke-linejoin="round" stroke-linecap="round" clip-path="url(#zw)"/>
<path d="M334.8 340.8 L338.5 341.3 L342.2 341.8 L345.4 343.2 L349.1 343.5 L352.7 344.9 L355.5 346.5 L358 348.7 L360.3 351.2 L362.4 353.9 L365.8 354.7 L368.3 356.9 L371 359.3 L373.1 361.6 L373.1 364.9 L372.8 368.2 L374.8 370.7 L374.5 374 L376 376.7 L377.6 380.1 L379.2 383.3 L381.7 385.5 L385 386.6 L387.7 388.4 L390.3 390.4 L393.4 392 L396.7 392.9 L399.8 394 L402.2 396.3 L405.8 396.7 L408.5 398.5 L411.4 400 L415 400.4 L418.1 401.6 L420.7 403.6 L423.4 405.3 L426.6 406.5 L428.5 409.5 L430.9 412 L432.8 414.9 L436.2 415.9 L439.3 417.2 L442.8 418 L444.9 420.7 L447.9 422.1 L451 423.6 L453.5 425.6 L455.1 428.6 L456.9 431.3 L459.8 432.7 L463 433.8 L464.6 436.8 L466.9 438.9 L468.8 441.3 L472.1 441.2 L475.4 441.1 L478 442.7 L480.8 443.6 L483.8 444.4 L486.1 446.8 L488.6 448.3 L491.3 450.2 L494.7 449.9 L497.2 452 L500.6 451.7 L503.2 453.8 L506.2 454.6 L509.3 455.1 L511.8 457.5" fill="none" stroke="#ff0000" stroke-width="9.6" stroke-linejoin="round" stroke-linecap="round" clip-path="url(#zw)"/>
<path d="M323.4 359.5 L325.2 362.6 L328.3 364 L331.6 365 L334.2 367 L337.3 368.3 L341.3 370.1 L343.6 372.9 L345.2 376 L346.8 379.2 L348.4 382.3 L349 384.3 L351.1 387 L354.1 388.4 L356.7 390.3 L359.4 392.1 L362 394.1 L365 396.3 L367.2 398.6 L369.4 400.8 L371.2 403.6 L373.3 406 L376.2 407.6 L378.4 409.8 L379.5 412.9 L382.9 413.8 L384.9 416.6 L387.6 418.4 L390.2 420.3 L392.2 423.2 L395 424.9 L397.6 426.8 L399.9 429.3 L401.6 432.4 L404.5 434 L406.5 436.8 L408.9 439.4 L411.4 441.4 L414.4 442.9 L417.4 444.1 L421 444.6 L424.4 445.3 L427.9 445.8 L430.5 448.2 L433.4 449.6 L436.3 451 L438.8 453 L440.5 455.8 L442.2 458.7 L444.3 461.1 L447.2 462.5 L449 465.3" fill="none" stroke="#ff0000" stroke-width="8.0" stroke-linejoin="round" stroke-linecap="round" clip-path="url(#zw)"/>
<path d="M323.9 394 L327.3 394.9 L330.5 396.4 L334.1 397 L337.3 398.4 L341.1 399.9 L342.9 403.1 L344.6 406.3 L347.1 408.4 L350.2 409.7 L351.9 412.8 L354.9 414.3 L357.2 416.6 L360.5 418.3 L362.7 420.7 L364.8 423.3 L366.7 425.9 L369 427.7 L371.2 430 L373.4 432.2 L375.7 434.5 L377.9 436.7 L380.2 439 L382.4 441.2 L384.1 443 L386.9 444.6 L389.7 446.3 L392.3 448.3 L395.1 450 L397.4 452.4 L400 454.5 L402.6 456.9 L404 460 L406.4 462 L409.1 463.8 L410.2 467.1 L413.2 468.6 L414.9 471.3 L416.9 473.9 L420.3 474.8 L422.1 477.6 L423.8 480.5 L426 482.8 L428 485.3 L430.4 487.4 L433.6 488.4 L436 490.5 L438.4 492.4 L440.2 495.2 L442.6 497.2 L445.1 499.1 L447.5 501.1 L450 503.1 L452.4 505 L456.9 504.5" fill="none" stroke="#ff0000" stroke-width="8.0" stroke-linejoin="round" stroke-linecap="round" clip-path="url(#zw)"/>
<path d="M327.2 426.7 L330.7 427.4 L334.5 427.7 L338.2 428.2 L341.4 429.5 L345.4 431.6 L346.8 434.6 L349 437 L350.9 439.5 L352.9 442.1 L354.7 444.7 L357 446.9 L360.7 448.5 L361.5 451.8 L362.5 455 L364.2 457.8 L365.8 460.6 L367.1 463.7 L369.9 465.8 L370.9 468.9 L373.7 470.6 L376.9 471.9 L379.6 473.7 L381.3 476.4 L384.1 478.2 L385.8 480.9 L386.9 484.3 L389.2 486.5 L391.7 488.5 L394 490.7 L395.8 493.3 L397.5 496.2 L399.4 498.7 L402 500.6" fill="none" stroke="#ff0000" stroke-width="6.4" stroke-linejoin="round" stroke-linecap="round" clip-path="url(#zw)"/>
<path d="M331.1 457.9 L334.6 458.7 L337.8 459.8 L340.9 461.1 L343.1 463.7 L346.1 465.1 L349.1 467.7 L351.6 469.9 L353.6 472.5 L355.5 475.1 L357 478.1 L358.5 481.1 L360.1 484.1 L362.3 486.6 L364 489.4 L365.7 492.2 L367.5 494.9 L370 497.2 L370.6 500.7 L370.6 504.5" fill="none" stroke="#ff0000" stroke-width="6.4" stroke-linejoin="round" stroke-linecap="round" clip-path="url(#zw)"/>
<path d="M437.8 346.8 L439.8 349.8 L441.9 352.7 L445.5 353 L448.4 354.6 L450.6 357.2 L452.7 360.1 L455 361.3 L457.8 363 L460.7 364.6 L461.9 367.8 L464.8 369.4 L466.8 371.8 L469.9 373.3 L472.2 375.7 L474.7 378.6 L478.4 379.1 L481 381.5 L484.2 383.1 L486.3 385.5 L488.9 387.4 L492 388.7 L494.1 391.4 L496.8 393.3 L500.3 394 L503.9 394.7 L507 396.3 L510.2 397.7 L513.7 398.7 L517.3 399.2 L520.7 400.3 L523.9 401.3 L526.3 403.7 L529.8 404.1 L532.4 406.3 L534.9 408.7 L538.4 409.1 L540.7 411.8 L543.1 414.3" fill="none" stroke="#ff0000" stroke-width="8.8" stroke-linejoin="round" stroke-linecap="round" clip-path="url(#zw)"/>
<path d="M401.5 324.6 L402.9 327.8 L405.8 329.7 L408.4 331.8 L411 333.9 L411.6 336.3 L412 339.6 L413.1 342.8 L413.9 346 L415.3 349.2 L417.4 352.2 L418.6 354.1 L420.6 357 L423.6 358.4 L425.4 361.5 L428.5 362.8 L431.6 364.2 L434.5 366.5 L437.3 368.9 L439.6 371.6 L440.4 375.3 L441.3 378.9 L444 381.3 L446.9 383.3 L449.5 386.1 L452.3 388.2 L456.9 386.9" fill="none" stroke="#ff0000" stroke-width="8.0" stroke-linejoin="round" stroke-linecap="round" clip-path="url(#zw)"/>
<path d="M350.9 277.2 L351.5 280.5 L354.1 283 L354.8 286.3 L356.2 289.3 L356.8 292.6 L357.6 295.9 L359.6 298.6 L362.2 301.1 L362.2 304.4 L362.7 307.9 L362.2 311.2 L362 314.5 L362 317.9 L360.6 321.1 L358.5 324 L358.1 327 L356.5 329.7 L356 332.7 L354.7 335.4 L353.9 338.4 L353.7 341.5 L351 343.7" fill="none" stroke="#ff0000" stroke-width="6.4" stroke-linejoin="round" stroke-linecap="round" clip-path="url(#zw)"/>
<path d="M316.1 413.3 L319.3 413.6 L321.6 415.9 L324.4 417 L327.5 417.3 L329.8 419.6 L332 422.2 L334.6 423.1 L337.9 424.1 L341.2 425.3 L344.5 426.2 L347.5 427.7 L350.3 429.4 L353.6 432 L355.5 434.6 L357.3 437.4 L358.2 440.7 L359.6 443.8 L361.7 446.3 L362.7 449.6" fill="none" stroke="#ff0000" stroke-width="4.8" stroke-linejoin="round" stroke-linecap="round" clip-path="url(#zw)"/>
<path d="M359 378.8 L361.2 381.1 L363.7 383.1 L366.3 384.9 L369.5 386.2 L372.3 388 L373.5 391.3 L376.2 392.4 L378.9 394.4 L381.2 396.7 L383.1 399.5 L386.3 400.8 L389.4 402.2 L391.6 403.6 L394.8 405.2 L397.9 406.8 L400.4 409.6 L403 412.2 L405.6 414.8 L409.2 415.2 L412.8 415.6 L415.2 417.8 L417.4 420.6 L420.2 422.2 L422.9 424.1 L425.5 426.1" fill="none" stroke="#ff0000" stroke-width="4.8" stroke-linejoin="round" stroke-linecap="round" clip-path="url(#zw)"/>
<path d="M344.3 319.2 L346.6 321.4 L347.5 324.7 L348.6 327.8 L349.7 331 L350.5 334.4 L353.1 336.3 L356 338 L358.8 339.8 L360.4 342.9 L361.4 346.4 L361.7 350.1 L362.7 353.6 L366.7 355.5" fill="none" stroke="#ff0000" stroke-width="4.8" stroke-linejoin="round" stroke-linecap="round" clip-path="url(#zw)"/>
<path d="M456.6 410.8 L458.5 413.4 L461.1 415.2 L463.4 417.3 L466.8 418.2 L468.7 420.8 L471.6 422.1 L473.3 425.1 L475.4 427.5 L478.3 428.9 L481.5 430 L484.4 431.3 L486.6 433.6 L488.6 436.1 L491.9 437.1 L495.2 437.9 L496.8 439.6 L499.7 440.8 L502.7 441.4 L505.9 441.7 L508.8 443 L511.8 443.6 L514.7 444.6 L517.7 445.6 L519.6 449.6" fill="none" stroke="#ff0000" stroke-width="4.0" stroke-linejoin="round" stroke-linecap="round" clip-path="url(#zw)"/>
<path d="M463.5 372 L464.8 374.9 L465.6 378.2 L467.4 380.7 L469.8 382.9 L472.2 385 L472.8 388.5 L474.3 391.3 L476.5 393.5 L479.8 395.5 L482.4 397.5 L484.7 399.9 L487.4 401.7 L490.5 403 L492.8 405.4 L494.7 408.6 L497.8 409.6 L501.3 410.1 L504.2 411.4 L506.9 412.9 L509.2 415.2 L512.3 416.1 L514.4 418.6 L516.6 421 L519.6 422.2" fill="none" stroke="#ff0000" stroke-width="4.0" stroke-linejoin="round" stroke-linecap="round" clip-path="url(#zw)"/>
<path d="M315.7 441.8 L319.3 442.5 L321.7 445.4 L325.1 446.5 L327.8 448.9 L331.3 449.7 L334 451.8 L335.2 454.9 L337.7 457.1 L338.5 460.6 L340.5 463.2 L343.2 465.2 L345.2 467.7 L346.6 470.4 L347.2 473.4 L347 476.7 L349.2 479.1 L350.6 481.8 L352.5 484 L352.8 487.6 L355.5 489.8 L358.4 491.9 L360.4 494.5 L362.1 497.3 L362.7 500.7 L362.7 504.5" fill="none" stroke="#ff0000" stroke-width="6.4" stroke-linejoin="round" stroke-linecap="round" clip-path="url(#zw)"/>
<path d="M318.7 474 L320.6 476.9 L322.1 480.1 L324.4 482.4 L327.2 484.4 L330.1 485.9 L330.9 489.3 L332.7 492 L335.9 493.8 L337.4 496.7 L339.7 499.1 L343.1 500.6" fill="none" stroke="#ff0000" stroke-width="4.8" stroke-linejoin="round" stroke-linecap="round" clip-path="url(#zw)"/>
<path d="M347.4 414 L350.1 416 L353.2 417.6 L356.4 419.1 L358.7 421.5 L360 423.1 L362.2 425.6 L365.5 425.6 L367.7 428.1 L370.9 428.3 L373.9 429 L376.3 431.1 L379 433.3 L381.4 435.4 L384.6 436.6 L386.9 438.8 L389.5 440.8 L390.7 444 L393.7 445.5 L395.2 446.8 L397.6 449.1 L400.9 448.9 L403.7 450 L406.1 452.1 L408.6 454 L412 453.8 L413.7 457.5" fill="none" stroke="#ff0000" stroke-width="4.8" stroke-linejoin="round" stroke-linecap="round" clip-path="url(#zw)"/>
<path d="M312.6 377.8 L316.3 378.6 L318.5 381.7 L321.9 383 L324.3 385.6 L326.6 388.6 L329.8 390.2 L333.2 391.5 L335.3 394.7" fill="none" stroke="#ff0000" stroke-width="4.8" stroke-linejoin="round" stroke-linecap="round" clip-path="url(#zw)"/>
<g clip-path="url(#ze)"><g transform="rotate(-65 740 320)"><rect x="440" y="20" width="600" height="600" fill="#f00" filter="url(#fred)"/></g>
<path d="M784.8 165.5L790.3 164.7L788.6 168.1Z" fill="#00f500"/>
<path d="M598.7 355.9L599.7 346.8L603.0 352.7Z" fill="#00f500"/>
<path d="M897.8 182.0L904.5 180.5L901.3 184.8Z" fill="#00f500"/>
<path d="M517.0 218.6L509.4 217.3L514.4 214.7Z" fill="#00f500"/>
<path d="M507.6 213.1L513.7 207.5L514.1 213.5Z" fill="#00f500"/>
<path d="M748.4 214.3L745.0 221.7L743.0 215.9Z" fill="#00f500"/>
<path d="M866.4 166.4L859.8 158.9L866.8 159.8Z" fill="#00f500"/>
<path d="M816.4 247.1L815.4 250.8L812.7 249.0Z" fill="#00f500"/>
<path d="M932.1 249.5L928.6 248.5L930.6 246.1Z" fill="#00f500"/>
<path d="M542.4 376.1L547.9 380.9L541.4 382.0Z" fill="#00f500"/>
<path d="M866.5 347.2L862.3 353.8L861.0 348.7Z" fill="#00f500"/>
<path d="M935.1 255.3L942.1 257.8L937.9 260.9Z" fill="#00f500"/>
<path d="M871.5 326.0L869.8 316.6L876.4 320.0Z" fill="#00f500"/>
<path d="M760.9 345.1L757.9 342.2L760.6 342.1Z" fill="#00f500"/>
<path d="M601.3 233.3L604.8 235.6L601.7 236.3Z" fill="#00f500"/>
<path d="M606.5 183.7L606.0 189.1L603.0 185.7Z" fill="#00f500"/>
<path d="M789.5 255.5L785.2 258.2L784.6 253.4Z" fill="#00f500"/>
<path d="M589.2 226.7L599.6 227.1L593.5 232.8Z" fill="#00f500"/>
<path d="M789.3 319.7L792.0 315.7L793.0 319.2Z" fill="#00f500"/>
<path d="M825.7 200.0L831.3 200.9L827.4 204.5Z" fill="#00f500"/>
<path d="M941.1 326.9L948.1 323.2L946.0 328.8Z" fill="#00f500"/>
<path d="M806.6 384.0L803.4 377.2L809.5 376.4Z" fill="#00f500"/>
<path d="M600.0 169.6L603.5 165.1L604.9 169.0Z" fill="#00f500"/>
<path d="M616.0 211.3L625.4 211.8L620.3 218.3Z" fill="#00f500"/>
<path d="M893.9 237.2L897.6 245.1L891.6 241.7Z" fill="#00f500"/>
<path d="M680.6 400.6L674.4 399.1L678.3 395.5Z" fill="#00f500"/>
<path d="M617.4 228.0L616.7 220.7L621.5 223.1Z" fill="#00f500"/>
<path d="M618.3 317.6L612.7 311.4L619.5 308.9Z" fill="#00f500"/>
<path d="M675.3 221.0L679.2 211.1L683.3 217.5Z" fill="#00f500"/>
<path d="M730.7 182.0L730.6 185.4L728.1 184.1Z" fill="#00f500"/>
<path d="M544.8 320.7L553.2 319.6L549.7 326.2Z" fill="#00f500"/>
<path d="M686.4 176.6L691.8 173.5L691.2 178.3Z" fill="#00f500"/>
<path d="M946.1 303.1L942.9 295.2L951.6 296.3Z" fill="#00f500"/>
<path d="M882.5 162.8L891.5 160.5L888.3 165.7Z" fill="#00f500"/>
<path d="M804.9 302.1L804.5 297.6L808.5 298.9Z" fill="#00f500"/>
<path d="M791.2 186.5L788.6 192.7L786.3 188.2Z" fill="#00f500"/>
<path d="M698.8 406.7L709.1 405.5L704.5 411.3Z" fill="#00f500"/>
<path d="M620.5 288.3L618.5 292.9L617.2 289.2Z" fill="#00f500"/>
<path d="M908.6 388.7L909.4 383.4L912.6 386.5Z" fill="#00f500"/>
<path d="M788.4 320.8L785.0 317.7L788.0 316.8Z" fill="#00f500"/>
<path d="M838.0 300.1L846.9 296.8L844.6 302.9Z" fill="#00f500"/>
<path d="M741.9 159.9L736.7 162.8L737.2 158.8Z" fill="#00f500"/>
<path d="M514.2 400.7L507.3 406.9L506.8 398.9Z" fill="#00f500"/>
<path d="M873.1 241.8L874.2 237.7L875.4 240.7Z" fill="#00f500"/>
<path d="M895.8 408.4L892.8 405.7L896.0 405.1Z" fill="#00f500"/>
<path d="M723.5 179.4L716.5 182.5L716.5 175.9Z" fill="#00f500"/>
<path d="M840.8 194.0L845.9 189.7L846.2 195.1Z" fill="#00f500"/>
<path d="M741.9 228.4L749.8 224.0L749.3 231.6Z" fill="#00f500"/>
<path d="M692.6 218.6L686.7 213.2L692.6 213.9Z" fill="#00f500"/>
<path d="M827.5 215.4L825.9 210.3L830.4 211.9Z" fill="#00f500"/>
<path d="M944.1 328.2L950.8 326.8L948.6 331.1Z" fill="#00f500"/>
<path d="M734.1 188.8L734.9 193.6L731.2 191.8Z" fill="#00f500"/>
<path d="M655.0 312.6L650.8 315.5L651.4 311.4Z" fill="#00f500"/>
<path d="M598.4 174.0L602.9 180.9L597.5 180.7Z" fill="#00f500"/>
<path d="M597.7 396.3L607.1 391.8L603.3 398.7Z" fill="#00f500"/>
<path d="M532.7 217.3L535.2 225.1L529.1 222.4Z" fill="#00f500"/>
<path d="M591.4 191.5L600.2 190.1L597.5 197.7Z" fill="#00f500"/>
<path d="M753.2 279.4L762.1 283.2L756.4 285.9Z" fill="#00f500"/>
<path d="M862.4 207.3L865.6 208.6L862.8 210.8Z" fill="#00f500"/>
<path d="M697.0 272.6L691.4 273.0L692.8 268.2Z" fill="#00f500"/>
<path d="M831.5 339.9L822.2 334.5L829.7 331.9Z" fill="#00f500"/>
<path d="M544.8 261.4L545.8 267.7L542.3 264.2Z" fill="#00f500"/>
<path d="M887.5 221.9L890.5 224.7L887.5 226.3Z" fill="#00f500"/>
<path d="M702.7 272.7L698.8 269.4L703.0 268.2Z" fill="#00f500"/>
<path d="M608.7 399.4L614.2 396.7L614.2 401.5Z" fill="#00f500"/>
<path d="M889.5 301.9L888.0 305.3L886.3 302.9Z" fill="#00f500"/>
<path d="M950.5 371.5L953.4 381.9L946.2 377.9Z" fill="#00f500"/>
<path d="M915.9 378.2L919.4 381.4L916.1 382.1Z" fill="#00f500"/>
<path d="M718.6 219.2L715.5 213.6L720.1 214.0Z" fill="#00f500"/>
<path d="M532.2 257.5L525.5 264.4L523.1 257.1Z" fill="#00f500"/>
<path d="M620.4 367.5L615.9 362.1L620.9 362.2Z" fill="#00f500"/>
<path d="M686.9 413.8L690.4 402.9L693.1 411.2Z" fill="#00f500"/>
<path d="M749.7 349.4L747.6 346.0L751.3 345.8Z" fill="#00f500"/>
<path d="M630.4 414.8L634.6 407.7L635.1 414.0Z" fill="#00f500"/>
<path d="M746.1 353.8L742.8 356.4L743.1 353.5Z" fill="#00f500"/>
<path d="M761.6 296.0L759.9 286.2L766.0 289.8Z" fill="#00f500"/>
<path d="M568.7 410.6L570.7 407.5L572.2 410.3Z" fill="#00f500"/>
<path d="M585.0 319.2L579.1 313.5L586.1 313.3Z" fill="#00f500"/>
<path d="M604.0 185.9L611.3 190.2L604.7 194.3Z" fill="#00f500"/>
<path d="M607.0 312.3L614.1 311.5L611.3 317.2Z" fill="#00f500"/>
<path d="M684.6 311.0L691.8 309.1L690.1 313.7Z" fill="#00f500"/>
<path d="M916.5 215.6L921.6 208.3L923.4 214.0Z" fill="#00f500"/>
<path d="M608.0 258.3L612.0 263.7L605.7 265.2Z" fill="#00f500"/>
<path d="M639.5 240.0L635.0 247.2L632.8 240.1Z" fill="#00f500"/>
<path d="M537.0 275.0L534.2 285.0L529.1 279.4Z" fill="#00f500"/>
<path d="M951.0 178.4L947.9 181.9L946.9 178.0Z" fill="#00f500"/>
<path d="M624.0 399.6L621.8 407.6L616.0 402.6Z" fill="#00f500"/>
<path d="M893.1 255.5L897.8 254.6L895.4 257.6Z" fill="#00f500"/>
<path d="M879.0 340.6L876.7 347.1L872.7 341.9Z" fill="#00f500"/>
<path d="M945.2 331.8L942.5 329.1L945.4 329.7Z" fill="#00f500"/>
<path d="M864.0 240.6L867.1 233.2L869.9 239.5Z" fill="#00f500"/>
<path d="M924.9 194.3L920.9 196.8L922.3 193.4Z" fill="#00f500"/>
<path d="M551.3 304.0L546.3 306.3L546.8 302.5Z" fill="#00f500"/>
<path d="M775.0 346.3L771.6 349.3L771.3 345.1Z" fill="#00f500"/>
<path d="M781.6 227.6L788.2 225.9L785.4 231.0Z" fill="#00f500"/>
<path d="M908.8 378.1L908.4 382.1L906.0 380.3Z" fill="#00f500"/>
<path d="M692.1 233.2L689.0 233.2L690.3 230.8Z" fill="#00f500"/>
<path d="M846.9 328.7L844.1 324.9L848.4 324.5Z" fill="#00f500"/>
<path d="M834.5 299.8L836.0 306.2L831.3 303.6Z" fill="#00f500"/>
<path d="M506.8 184.5L499.3 177.3L507.4 178.3Z" fill="#00f500"/>
<path d="M909.2 297.1L909.5 306.4L903.9 303.2Z" fill="#00f500"/>
<path d="M760.9 196.3L764.5 197.8L762.4 200.0Z" fill="#00f500"/>
<path d="M636.4 398.4L634.9 390.2L641.3 392.0Z" fill="#00f500"/>
<path d="M887.6 396.5L885.1 391.9L889.0 393.6Z" fill="#00f500"/>
<path d="M610.6 191.6L609.9 182.2L615.0 185.4Z" fill="#00f500"/>
<path d="M895.3 262.0L902.3 266.2L897.3 268.3Z" fill="#00f500"/>
<path d="M573.6 405.5L564.7 404.3L569.1 398.5Z" fill="#00f500"/>
<path d="M933.8 370.7L943.8 367.5L939.4 374.1Z" fill="#00f500"/>
<path d="M509.9 354.6L508.3 349.8L513.1 351.0Z" fill="#00f500"/>
<path d="M917.3 373.8L915.6 364.2L921.8 367.2Z" fill="#00f500"/>
<path d="M868.3 233.2L860.4 232.1L865.1 226.3Z" fill="#00f500"/>
<path d="M544.4 383.4L553.5 384.3L548.6 390.0Z" fill="#00f500"/>
<path d="M596.3 373.0L601.5 368.8L601.4 374.2Z" fill="#00f500"/>
<path d="M637.9 369.6L634.4 366.6L638.5 365.5Z" fill="#00f500"/>
<path d="M513.0 207.8L512.7 212.8L508.7 210.8Z" fill="#00f500"/>
<path d="M888.1 408.4L892.0 410.8L888.4 413.2Z" fill="#00f500"/>
<path d="M794.2 266.2L783.8 267.3L788.1 260.4Z" fill="#00f500"/>
<path d="M739.1 403.1L742.8 402.2L742.2 405.4Z" fill="#00f500"/>
<path d="M930.9 205.7L938.3 200.8L939.8 208.0Z" fill="#00f500"/>
<path d="M616.2 186.3L621.7 185.2L620.5 190.2Z" fill="#00f500"/>
<path d="M829.4 237.4L830.8 244.9L825.3 242.3Z" fill="#00f500"/>
<path d="M726.0 261.3L729.3 255.9L732.7 260.7Z" fill="#00f500"/>
<path d="M615.3 342.4L615.5 346.1L613.4 344.4Z" fill="#00f500"/>
<path d="M918.5 295.5L918.3 304.5L913.6 299.7Z" fill="#00f500"/>
<path d="M837.2 335.3L831.8 337.1L832.3 333.0Z" fill="#00f500"/>
<path d="M534.8 332.6L528.8 334.7L530.4 331.0Z" fill="#00f500"/>
<path d="M645.7 378.5L643.0 385.1L638.3 380.5Z" fill="#00f500"/>
<path d="M635.6 236.8L637.4 243.3L633.0 240.1Z" fill="#00f500"/>
<path d="M679.6 234.9L683.5 236.4L680.2 238.1Z" fill="#00f500"/>
<path d="M685.7 407.7L690.0 399.8L690.9 406.7Z" fill="#00f500"/>
<path d="M904.0 322.3L906.0 316.8L908.0 320.9Z" fill="#00f500"/>
<path d="M743.5 159.3L749.1 158.2L747.2 161.9Z" fill="#00f500"/>
<path d="M695.5 315.0L688.9 310.3L694.9 308.5Z" fill="#00f500"/>
<path d="M708.8 272.1L712.1 275.3L709.0 276.7Z" fill="#00f500"/>
<path d="M718.1 395.0L710.6 398.9L711.4 391.6Z" fill="#00f500"/>
<path d="M572.5 180.9L579.4 179.3L576.5 184.5Z" fill="#00f500"/>
<path d="M784.9 252.4L779.9 245.3L786.6 244.6Z" fill="#00f500"/>
<path d="M840.7 333.8L837.0 337.6L836.5 334.1Z" fill="#00f500"/>
<path d="M590.7 163.6L591.6 168.5L587.8 166.5Z" fill="#00f500"/>
<path d="M715.5 379.4L715.3 382.7L712.6 381.6Z" fill="#00f500"/>
<path d="M688.7 325.4L684.7 325.9L685.9 322.2Z" fill="#00f500"/>
<path d="M812.5 285.7L816.3 287.9L812.7 290.2Z" fill="#00f500"/>
<path d="M791.1 164.3L793.5 156.7L798.2 161.0Z" fill="#00f500"/>
<path d="M848.9 184.9L849.1 190.4L844.4 188.4Z" fill="#00f500"/>
<path d="M578.2 413.0L577.3 405.5L581.6 409.4Z" fill="#00f500"/>
<path d="M520.3 229.7L520.0 220.1L525.8 225.0Z" fill="#00f500"/>
<path d="M703.4 372.6L702.1 365.1L707.6 366.7Z" fill="#00f500"/>
<path d="M941.4 309.9L950.1 313.0L944.7 318.3Z" fill="#00f500"/>
<path d="M905.7 321.1L896.4 320.3L902.6 316.8Z" fill="#00f500"/>
<path d="M730.7 373.7L726.7 380.1L724.9 374.8Z" fill="#00f500"/>
<path d="M899.8 353.5L907.0 351.2L903.3 355.6Z" fill="#00f500"/>
<path d="M614.5 220.3L621.0 225.7L615.1 226.5Z" fill="#00f500"/>
<path d="M840.7 297.8L843.1 291.3L847.3 295.5Z" fill="#00f500"/>
<path d="M623.7 177.0L626.3 181.7L621.8 180.8Z" fill="#00f500"/>
<path d="M621.0 247.1L620.2 239.5L624.7 243.5Z" fill="#00f500"/>
<path d="M566.4 217.7L562.0 224.9L560.4 218.0Z" fill="#00f500"/>
<path d="M814.5 175.4L819.7 173.6L819.5 178.2Z" fill="#00f500"/>
<path d="M745.0 270.8L741.6 267.0L745.7 267.4Z" fill="#00f500"/>
<path d="M691.5 391.7L692.3 398.2L686.5 395.9Z" fill="#00f500"/>
<path d="M814.8 387.5L807.9 383.1L814.4 380.1Z" fill="#00f500"/>
<path d="M668.5 159.5L674.6 161.5L670.8 163.6Z" fill="#00f500"/>
<path d="M839.5 376.1L843.0 386.2L835.7 382.8Z" fill="#00f500"/>
<path d="M684.4 354.9L691.5 351.3L689.8 356.6Z" fill="#00f500"/>
<path d="M774.2 216.6L772.1 220.1L770.0 216.4Z" fill="#00f500"/>
<path d="M699.4 166.8L696.4 170.9L694.6 166.2Z" fill="#00f500"/>
<path d="M803.0 265.5L806.0 262.5L806.9 266.1Z" fill="#00f500"/>
<path d="M711.6 197.5L706.8 190.4L712.8 192.0Z" fill="#00f500"/>
<path d="M512.8 258.2L515.7 264.7L509.9 263.8Z" fill="#00f500"/>
<path d="M510.6 329.1L510.8 325.0L513.7 326.9Z" fill="#00f500"/>
<path d="M704.2 173.1L708.2 169.6L709.0 174.8Z" fill="#00f500"/>
<path d="M590.3 245.9L598.4 241.0L595.6 248.0Z" fill="#00f500"/>
<path d="M666.9 359.4L668.7 350.6L673.8 355.9Z" fill="#00f500"/>
<path d="M613.9 183.3L611.4 181.3L613.8 180.1Z" fill="#00f500"/>
<path d="M745.9 418.6L742.1 423.3L741.0 418.9Z" fill="#00f500"/>
<path d="M795.2 366.9L788.1 364.3L792.8 360.4Z" fill="#00f500"/>
<path d="M840.8 404.5L840.8 409.3L837.7 406.8Z" fill="#00f500"/>
<path d="M508.2 197.3L511.7 199.3L508.4 200.9Z" fill="#00f500"/>
<path d="M804.1 306.0L800.0 309.2L800.2 305.3Z" fill="#00f500"/>
<path d="M816.1 361.7L812.2 358.6L815.5 358.0Z" fill="#00f500"/>
<path d="M772.8 352.0L775.6 355.3L772.0 355.1Z" fill="#00f500"/>
<path d="M866.3 410.2L870.6 409.4L869.5 412.1Z" fill="#00f500"/>
<path d="M516.2 242.1L507.4 243.3L512.4 238.4Z" fill="#00f500"/>
<path d="M928.8 258.9L935.8 264.5L929.4 265.5Z" fill="#00f500"/>
<path d="M536.7 335.8L537.2 342.9L531.5 339.9Z" fill="#00f500"/>
<path d="M551.2 361.2L542.8 365.3L543.9 358.3Z" fill="#00f500"/>
<path d="M765.8 187.5L776.1 190.7L768.8 194.8Z" fill="#00f500"/>
<path d="M848.5 250.7L853.7 246.9L854.2 251.2Z" fill="#00f500"/>
<path d="M663.6 290.5L668.0 288.4L668.1 293.0Z" fill="#00f500"/>
<path d="M881.9 376.2L881.3 371.6L883.7 373.3Z" fill="#00f500"/>
<path d="M934.4 320.3L934.8 330.0L929.2 324.6Z" fill="#00f500"/>
<path d="M822.5 270.6L820.4 277.7L815.5 274.2Z" fill="#00f500"/>
<path d="M937.6 234.4L929.7 232.3L934.6 227.1Z" fill="#00f500"/>
<path d="M743.7 282.3L745.0 288.1L740.2 286.8Z" fill="#00f500"/>
<path d="M825.2 233.7L827.0 224.7L832.2 230.2Z" fill="#00f500"/>
<path d="M879.3 182.2L872.8 188.0L871.4 180.2Z" fill="#00f500"/>
<path d="M612.3 277.2L610.9 285.1L607.3 279.7Z" fill="#00f500"/>
<path d="M670.9 162.1L675.9 168.4L668.9 170.3Z" fill="#00f500"/>
<path d="M576.9 213.5L583.9 210.4L584.6 216.5Z" fill="#00f500"/>
<path d="M655.4 393.1L648.4 388.7L654.3 386.2Z" fill="#00f500"/>
<path d="M625.6 157.0L628.3 166.8L620.8 162.8Z" fill="#00f500"/>
<path d="M541.8 349.4L534.9 348.8L537.7 345.0Z" fill="#00f500"/>
<path d="M842.3 344.0L837.5 336.8L843.9 339.1Z" fill="#00f500"/>
<path d="M718.5 366.5L720.7 363.8L722.3 366.2Z" fill="#00f500"/>
<path d="M602.6 338.4L598.3 342.8L598.6 338.3Z" fill="#00f500"/>
<path d="M765.7 283.9L757.9 284.7L761.4 280.6Z" fill="#00f500"/>
<path d="M694.7 353.1L690.3 357.0L690.4 352.3Z" fill="#00f500"/>
<path d="M815.6 227.5L819.2 231.0L815.8 232.2Z" fill="#00f500"/>
<path d="M555.6 212.2L551.9 210.8L554.9 208.7Z" fill="#00f500"/>
<path d="M739.0 359.9L741.8 355.5L742.6 359.0Z" fill="#00f500"/>
<path d="M597.5 281.0L602.2 286.9L594.9 287.4Z" fill="#00f500"/>
<path d="M939.0 293.3L942.4 297.5L937.7 297.1Z" fill="#00f500"/>
<path d="M548.0 211.4L543.1 212.5L545.1 208.7Z" fill="#00f500"/>
<path d="M578.5 167.2L579.9 159.6L582.8 165.1Z" fill="#00f500"/>
<path d="M620.1 415.9L624.1 409.2L625.9 413.8Z" fill="#00f500"/>
<path d="M813.0 198.2L811.7 187.8L817.1 192.9Z" fill="#00f500"/>
<path d="M718.2 390.3L721.2 382.6L723.2 388.0Z" fill="#00f500"/>
<path d="M710.1 272.0L713.9 275.2L710.7 276.1Z" fill="#00f500"/>
<path d="M520.2 402.0L527.0 404.7L521.8 406.6Z" fill="#00f500"/>
<path d="M872.0 265.3L868.5 265.9L869.6 262.9Z" fill="#00f500"/>
<path d="M781.5 172.0L785.8 174.0L782.8 175.4Z" fill="#00f500"/>
<path d="M758.0 242.7L749.4 243.6L751.3 236.0Z" fill="#00f500"/>
<path d="M550.5 362.2L550.9 355.1L555.7 357.6Z" fill="#00f500"/>
<path d="M857.4 222.5L851.8 218.3L857.1 216.6Z" fill="#00f500"/>
<path d="M698.2 278.1L700.0 270.4L705.9 274.4Z" fill="#00f500"/>
<path d="M949.3 241.9L941.3 241.0L945.3 236.7Z" fill="#00f500"/>
<path d="M770.0 356.2L772.1 347.1L777.8 352.2Z" fill="#00f500"/>
<path d="M597.5 217.2L588.9 215.4L595.2 212.6Z" fill="#00f500"/>
<path d="M573.0 204.9L569.6 207.2L569.6 204.4Z" fill="#00f500"/>
<path d="M498.0 280.1L498.8 273.5L503.7 276.3Z" fill="#00f500"/>
<path d="M626.2 220.4L631.3 215.4L633.7 221.4Z" fill="#00f500"/>
<path d="M812.2 280.3L816.4 273.3L819.2 278.4Z" fill="#00f500"/>
<path d="M915.7 369.3L911.4 363.6L917.7 363.0Z" fill="#00f500"/>
<path d="M794.5 400.7L800.2 400.2L798.9 404.5Z" fill="#00f500"/>
<path d="M743.2 333.7L743.7 322.9L748.4 328.5Z" fill="#00f500"/>
<path d="M870.0 176.7L874.6 178.6L871.5 180.1Z" fill="#00f500"/>
<path d="M636.3 358.4L637.6 350.5L640.6 356.0Z" fill="#00f500"/>
<path d="M634.6 191.6L629.9 197.1L627.1 191.5Z" fill="#00f500"/>
<path d="M818.7 403.8L815.3 409.1L812.5 404.7Z" fill="#00f500"/>
<path d="M724.3 180.4L720.7 182.5L721.5 179.8Z" fill="#00f500"/>
<path d="M693.4 241.0L697.4 244.3L693.3 245.2Z" fill="#00f500"/>
<path d="M541.4 415.4L536.1 408.2L543.9 408.5Z" fill="#00f500"/>
<path d="M754.1 410.9L755.8 402.0L762.4 407.0Z" fill="#00f500"/>
<path d="M800.7 228.9L804.5 229.2L802.3 231.4Z" fill="#00f500"/>
<path d="M835.9 280.9L844.8 281.1L840.0 285.1Z" fill="#00f500"/>
<path d="M911.1 203.0L916.5 208.1L911.1 209.5Z" fill="#00f500"/>
<path d="M784.8 285.6L787.7 289.0L784.4 288.4Z" fill="#00f500"/>
<path d="M652.6 249.2L656.4 242.0L659.1 248.0Z" fill="#00f500"/>
<path d="M886.2 250.5L882.1 242.9L888.7 244.8Z" fill="#00f500"/>
<path d="M631.0 400.7L634.6 407.5L626.8 407.0Z" fill="#00f500"/>
<path d="M744.3 278.7L748.5 275.1L749.0 279.6Z" fill="#00f500"/>
<path d="M648.6 410.5L644.7 415.8L643.8 410.9Z" fill="#00f500"/>
<path d="M732.7 412.4L735.3 419.7L728.8 417.4Z" fill="#00f500"/>
<path d="M741.5 266.8L746.3 265.7L745.1 268.8Z" fill="#00f500"/>
<path d="M663.3 352.2L665.9 359.9L660.4 357.9Z" fill="#00f500"/>
<path d="M839.5 209.6L845.5 210.6L841.4 215.4Z" fill="#00f500"/>
<path d="M915.3 269.6L922.2 273.8L915.8 276.3Z" fill="#00f500"/>
<path d="M559.0 412.1L553.6 417.3L552.1 412.3Z" fill="#00f500"/>
<path d="M607.5 205.4L604.2 198.8L609.9 199.9Z" fill="#00f500"/>
<path d="M743.3 181.3L753.9 181.6L748.8 187.8Z" fill="#00f500"/>
<path d="M908.9 281.5L911.1 277.5L912.0 280.8Z" fill="#00f500"/>
<path d="M869.6 289.6L876.3 285.1L877.1 290.8Z" fill="#00f500"/>
<path d="M733.2 234.4L724.2 233.5L730.0 228.1Z" fill="#00f500"/>
<path d="M944.2 226.2L936.9 222.8L941.8 220.9Z" fill="#00f500"/>
<path d="M671.1 403.4L670.0 396.6L674.7 398.5Z" fill="#00f500"/>
<path d="M892.6 385.0L896.9 381.8L897.0 386.0Z" fill="#00f500"/>
<path d="M853.6 262.5L861.2 268.0L854.5 271.2Z" fill="#00f500"/>
<path d="M729.6 370.4L731.2 374.9L726.7 374.0Z" fill="#00f500"/>
<path d="M630.8 307.8L640.3 313.0L633.5 316.1Z" fill="#00f500"/>
<path d="M724.5 198.2L719.6 202.7L718.0 197.8Z" fill="#00f500"/>
<path d="M657.5 307.0L651.1 303.4L657.1 301.8Z" fill="#00f500"/>
<path d="M705.2 246.4L702.3 242.8L705.7 242.2Z" fill="#00f500"/>
<path d="M812.0 306.4L816.7 308.0L814.2 310.4Z" fill="#00f500"/>
<path d="M845.2 168.1L853.0 168.4L849.4 174.3Z" fill="#00f500"/>
<path d="M814.6 373.2L817.5 367.4L819.4 371.4Z" fill="#00f500"/>
<path d="M798.7 367.5L802.6 377.9L795.8 375.5Z" fill="#00f500"/>
<path d="M726.1 172.0L718.9 169.7L723.3 167.2Z" fill="#00f500"/>
<path d="M763.1 391.0L762.4 381.6L768.7 384.9Z" fill="#00f500"/>
<path d="M700.6 293.8L699.3 300.4L695.9 296.2Z" fill="#00f500"/>
<path d="M821.3 264.0L829.5 265.1L824.6 269.3Z" fill="#00f500"/>
<path d="M566.1 286.9L569.0 276.2L572.6 283.6Z" fill="#00f500"/>
<path d="M654.1 335.9L654.3 344.3L649.6 340.6Z" fill="#00f500"/>
<path d="M879.2 378.0L887.3 378.0L885.1 384.3Z" fill="#00f500"/>
<path d="M674.6 245.6L666.7 244.7L670.1 239.6Z" fill="#00f500"/>
<path d="M841.0 384.8L843.8 387.2L841.1 387.9Z" fill="#00f500"/>
<path d="M534.5 328.4L525.3 325.7L530.4 320.7Z" fill="#00f500"/>
<path d="M946.4 351.3L952.6 354.2L947.7 356.1Z" fill="#00f500"/>
<path d="M549.8 324.8L541.3 329.4L542.5 322.0Z" fill="#00f500"/>
<path d="M703.2 344.8L694.4 342.3L699.8 337.1Z" fill="#00f500"/>
<path d="M523.7 368.0L518.6 369.4L519.3 365.7Z" fill="#00f500"/>
<path d="M671.4 201.0L664.6 197.3L670.7 196.4Z" fill="#00f500"/>
<path d="M752.0 366.0L756.1 363.8L755.3 367.5Z" fill="#00f500"/>
<path d="M531.7 388.7L537.0 382.2L537.5 388.3Z" fill="#00f500"/>
<path d="M610.6 398.6L607.0 399.5L607.8 395.9Z" fill="#00f500"/>
<path d="M706.7 229.0L705.0 224.4L709.1 225.1Z" fill="#00f500"/>
<path d="M507.0 374.1L498.6 369.4L506.1 366.4Z" fill="#00f500"/>
<path d="M805.3 197.3L807.9 203.4L803.3 202.7Z" fill="#00f500"/>
<path d="M658.9 315.8L651.0 313.0L657.1 310.6Z" fill="#00f500"/>
<path d="M687.3 229.0L691.0 219.6L694.2 225.3Z" fill="#00f500"/>
<path d="M588.9 256.2L593.3 261.5L587.4 260.9Z" fill="#00f500"/>
<path d="M610.2 311.3L602.5 309.0L608.1 306.5Z" fill="#00f500"/>
<path d="M945.0 242.4L945.3 231.0L950.2 237.3Z" fill="#00f500"/>
<path d="M793.7 234.8L795.8 227.1L798.7 232.1Z" fill="#00f500"/>
<path d="M810.8 353.5L807.1 355.2L807.9 352.5Z" fill="#00f500"/>
<path d="M775.0 283.9L775.9 293.9L769.6 290.0Z" fill="#00f500"/>
<path d="M627.7 363.4L632.8 369.5L627.3 369.9Z" fill="#00f500"/>
<path d="M661.4 329.0L654.5 327.5L657.8 322.9Z" fill="#00f500"/>
<path d="M809.3 349.1L801.8 350.8L803.5 345.1Z" fill="#00f500"/>
<path d="M871.8 322.0L880.4 318.7L878.5 326.5Z" fill="#00f500"/>
<path d="M789.9 244.0L787.6 238.4L793.0 239.6Z" fill="#00f500"/>
<path d="M763.2 350.2L759.4 352.3L759.7 349.5Z" fill="#00f500"/>
<path d="M635.4 353.7L631.3 356.6L632.4 352.8Z" fill="#00f500"/>
<path d="M565.4 300.0L555.1 304.1L557.5 297.3Z" fill="#00f500"/>
<path d="M742.4 393.5L741.7 402.0L735.7 397.4Z" fill="#00f500"/>
<path d="M617.5 371.0L616.7 378.2L613.4 373.8Z" fill="#00f500"/>
<path d="M859.6 354.3L864.6 351.2L864.3 355.5Z" fill="#00f500"/>
<path d="M549.6 411.7L551.7 407.8L553.2 411.1Z" fill="#00f500"/>
<path d="M938.5 380.3L937.8 387.6L932.0 384.2Z" fill="#00f500"/>
<path d="M940.1 416.6L938.8 406.7L944.1 411.2Z" fill="#00f500"/>
<path d="M666.6 364.9L664.5 367.6L663.4 365.5Z" fill="#00f500"/>
<path d="M742.2 273.6L744.3 282.0L738.6 278.4Z" fill="#00f500"/>
<path d="M797.4 313.4L804.8 307.2L804.9 314.1Z" fill="#00f500"/>
<path d="M925.8 189.3L920.7 189.8L922.4 186.6Z" fill="#00f500"/>
<path d="M507.4 391.7L510.4 385.7L513.8 390.0Z" fill="#00f500"/>
<path d="M912.9 215.6L913.3 219.3L910.5 217.9Z" fill="#00f500"/>
<path d="M867.8 395.1L873.3 394.5L871.4 398.3Z" fill="#00f500"/>
<path d="M681.4 191.1L689.2 194.4L684.5 199.7Z" fill="#00f500"/>
<path d="M637.5 285.7L638.8 289.6L635.9 289.0Z" fill="#00f500"/>
<path d="M901.7 192.3L900.8 198.7L897.2 196.2Z" fill="#00f500"/>
<path d="M807.3 351.7L801.9 359.0L798.8 351.4Z" fill="#00f500"/>
<path d="M690.4 354.9L686.0 353.2L688.8 351.4Z" fill="#00f500"/>
<path d="M690.3 184.1L687.2 189.7L684.5 184.7Z" fill="#00f500"/>
<path d="M683.6 409.5L681.7 406.6L684.8 406.9Z" fill="#00f500"/>
<path d="M669.7 280.3L661.0 275.9L667.3 271.8Z" fill="#00f500"/>
<path d="M883.5 181.3L889.7 185.6L883.6 188.3Z" fill="#00f500"/>
<path d="M744.0 410.9L748.3 413.4L744.7 416.3Z" fill="#00f500"/>
<path d="M680.8 211.2L677.0 210.5L679.3 207.9Z" fill="#00f500"/>
<path d="M886.3 278.5L878.3 281.5L881.3 275.5Z" fill="#00f500"/>
<path d="M790.8 315.1L788.0 317.2L787.7 314.6Z" fill="#00f500"/>
<path d="M856.3 224.4L852.2 225.0L853.9 221.8Z" fill="#00f500"/>
<path d="M758.1 180.9L749.8 180.6L754.5 174.8Z" fill="#00f500"/>
<path d="M596.8 220.3L587.8 215.6L595.4 213.7Z" fill="#00f500"/>
<path d="M651.6 202.5L642.5 196.8L649.3 195.3Z" fill="#00f500"/>
<path d="M498.7 382.7L501.9 380.7L502.4 384.3Z" fill="#00f500"/>
<path d="M556.0 226.2L559.5 222.7L559.5 226.4Z" fill="#00f500"/>
<path d="M798.7 168.4L795.4 167.1L798.0 165.6Z" fill="#00f500"/>
<path d="M857.6 219.3L857.8 224.2L853.9 223.1Z" fill="#00f500"/>
<path d="M578.5 168.7L582.4 176.6L576.0 175.3Z" fill="#00f500"/>
<path d="M740.5 353.0L736.3 357.8L734.5 353.3Z" fill="#00f500"/>
<path d="M849.7 295.8L847.8 292.8L851.1 292.4Z" fill="#00f500"/>
<path d="M725.0 404.5L728.8 405.2L726.3 407.0Z" fill="#00f500"/>
<path d="M851.0 381.6L856.0 387.4L850.3 386.6Z" fill="#00f500"/>
<path d="M705.4 412.8L704.7 408.9L707.4 410.3Z" fill="#00f500"/>
<path d="M715.5 259.7L720.1 265.9L714.5 267.1Z" fill="#00f500"/>
<path d="M722.5 395.1L719.9 398.7L719.6 395.6Z" fill="#00f500"/>
<path d="M538.1 319.6L534.2 318.9L536.6 316.8Z" fill="#00f500"/>
<path d="M619.6 323.9L627.6 323.0L622.7 326.9Z" fill="#00f500"/>
<path d="M650.1 416.9L647.4 422.6L644.1 417.5Z" fill="#00f500"/>
<path d="M702.0 316.4L705.9 315.8L704.4 318.8Z" fill="#00f500"/>
<path d="M816.2 377.1L818.0 385.7L813.1 381.3Z" fill="#00f500"/>
<path d="M848.9 347.7L845.5 350.2L844.5 346.7Z" fill="#00f500"/>
<path d="M706.5 220.2L702.1 222.6L702.1 217.7Z" fill="#00f500"/>
<path d="M701.7 268.1L705.6 266.3L704.7 269.4Z" fill="#00f500"/>
<path d="M689.0 334.7L692.7 329.5L694.1 333.5Z" fill="#00f500"/>
<path d="M566.5 399.5L570.4 398.5L569.3 401.2Z" fill="#00f500"/>
<path d="M873.4 186.5L872.8 182.3L875.6 183.6Z" fill="#00f500"/>
<path d="M834.0 367.1L835.0 374.4L830.0 371.8Z" fill="#00f500"/>
<path d="M761.7 303.5L767.2 306.5L762.6 307.5Z" fill="#00f500"/>
<path d="M559.3 253.8L550.8 253.9L555.5 249.2Z" fill="#00f500"/>
<path d="M840.4 381.7L841.4 388.8L835.5 387.8Z" fill="#00f500"/>
<path d="M932.7 317.5L936.0 312.7L937.5 317.2Z" fill="#00f500"/>
<path d="M758.4 219.6L758.1 211.1L762.8 215.8Z" fill="#00f500"/>
<path d="M604.8 191.8L595.5 188.6L602.5 185.3Z" fill="#00f500"/>
<path d="M667.6 362.0L661.5 356.4L667.4 356.7Z" fill="#00f500"/>
<path d="M864.5 374.0L866.6 384.6L860.1 381.3Z" fill="#00f500"/>
<path d="M871.5 322.8L863.7 319.4L869.1 316.9Z" fill="#00f500"/>
<path d="M515.8 398.1L511.4 406.9L508.7 401.1Z" fill="#00f500"/>
<path d="M622.0 202.4L624.2 209.9L618.4 209.0Z" fill="#00f500"/>
<path d="M638.6 246.4L640.9 249.1L638.5 249.4Z" fill="#00f500"/>
<path d="M888.0 308.2L891.8 303.7L893.3 308.3Z" fill="#00f500"/>
<path d="M561.9 323.8L565.4 323.2L564.5 325.7Z" fill="#00f500"/>
<path d="M838.7 218.2L832.3 217.1L836.4 213.8Z" fill="#00f500"/>
<path d="M654.1 261.1L648.9 254.3L654.7 253.6Z" fill="#00f500"/>
<path d="M851.1 305.8L850.9 309.5L848.2 307.8Z" fill="#00f500"/>
<path d="M520.4 203.9L521.3 197.1L526.3 201.5Z" fill="#00f500"/>
<path d="M806.2 227.1L804.7 235.2L800.8 229.5Z" fill="#00f500"/>
<path d="M718.4 271.8L721.4 276.1L717.4 276.4Z" fill="#00f500"/>
<path d="M836.5 191.5L840.5 186.0L841.7 190.6Z" fill="#00f500"/>
<path d="M630.9 338.3L624.4 338.9L626.9 334.1Z" fill="#00f500"/>
<path d="M803.1 169.7L801.6 175.1L798.1 171.2Z" fill="#00f500"/>
<path d="M772.9 161.6L767.3 164.1L768.6 160.4Z" fill="#00f500"/>
<path d="M592.1 196.3L595.3 192.7L596.3 197.0Z" fill="#00f500"/>
<path d="M645.3 166.4L645.3 157.6L650.3 160.7Z" fill="#00f500"/>
<path d="M580.5 263.4L574.4 257.5L580.6 256.4Z" fill="#00f500"/>
<path d="M721.4 373.0L730.1 375.1L724.5 379.7Z" fill="#00f500"/>
<path d="M530.3 384.1L533.9 382.5L533.2 385.1Z" fill="#00f500"/>
<path d="M512.8 396.3L507.5 404.9L505.4 398.3Z" fill="#00f500"/>
<path d="M763.9 309.3L756.9 313.4L756.9 307.2Z" fill="#00f500"/>
<path d="M686.8 191.7L687.8 187.9L689.0 190.7Z" fill="#00f500"/>
<path d="M650.4 367.0L647.4 372.6L643.6 367.6Z" fill="#00f500"/>
<path d="M875.8 397.2L874.9 401.4L873.0 399.3Z" fill="#00f500"/>
<path d="M875.7 222.5L881.9 219.3L881.7 225.3Z" fill="#00f500"/>
<path d="M738.8 264.1L732.6 263.4L736.6 261.1Z" fill="#00f500"/>
<path d="M655.0 248.1L650.1 246.7L653.8 245.4Z" fill="#00f500"/>
<path d="M725.7 189.1L732.8 187.0L730.6 191.9Z" fill="#00f500"/>
<path d="M912.5 250.1L907.9 255.7L904.7 250.7Z" fill="#00f500"/>
<path d="M870.5 374.1L865.6 371.6L868.9 370.2Z" fill="#00f500"/>
<path d="M561.9 209.5L569.3 208.5L565.6 213.9Z" fill="#00f500"/>
<path d="M842.3 333.1L839.4 329.9L842.9 329.0Z" fill="#00f500"/>
<path d="M849.4 283.7L850.3 292.8L844.8 288.2Z" fill="#00f500"/>
<path d="M839.6 281.9L837.7 272.9L844.4 274.4Z" fill="#00f500"/>
<path d="M755.3 329.5L750.1 323.0L756.3 323.7Z" fill="#00f500"/>
<path d="M890.4 325.2L886.5 324.1L888.9 321.5Z" fill="#00f500"/>
<path d="M528.1 276.8L530.7 271.8L532.1 276.3Z" fill="#00f500"/>
<path d="M624.7 178.5L619.6 174.3L624.3 172.3Z" fill="#00f500"/>
<path d="M641.3 279.0L637.9 278.8L639.6 276.2Z" fill="#00f500"/>
<path d="M876.8 175.1L876.2 185.0L871.1 180.9Z" fill="#00f500"/>
<path d="M887.0 316.4L887.4 323.0L882.8 321.2Z" fill="#00f500"/>
<path d="M708.3 309.3L703.4 302.2L710.5 302.0Z" fill="#00f500"/>
<path d="M900.8 272.2L908.3 276.1L901.2 279.4Z" fill="#00f500"/>
<path d="M797.2 244.4L791.0 246.8L792.1 241.6Z" fill="#00f500"/>
<path d="M567.9 173.7L570.2 176.7L567.0 177.2Z" fill="#00f500"/>
<path d="M906.2 244.7L908.9 251.7L903.1 251.8Z" fill="#00f500"/>
<path d="M728.5 202.2L727.2 207.9L725.3 204.7Z" fill="#00f500"/>
<path d="M698.8 270.6L699.6 277.4L694.6 274.7Z" fill="#00f500"/>
<path d="M569.5 254.5L574.6 256.8L571.1 258.8Z" fill="#00f500"/>
<path d="M685.6 243.9L687.9 249.9L682.6 250.3Z" fill="#00f500"/>
<path d="M857.0 327.0L855.5 330.5L853.8 328.3Z" fill="#00f500"/>
<path d="M545.1 334.6L541.7 339.4L540.9 335.4Z" fill="#00f500"/>
<path d="M831.1 332.2L821.8 334.8L823.6 328.0Z" fill="#00f500"/>
<path d="M889.1 244.7L897.2 245.6L892.7 249.3Z" fill="#00f500"/>
<path d="M569.4 252.0L559.1 254.6L561.9 247.9Z" fill="#00f500"/>
<path d="M815.3 266.2L809.9 261.9L815.0 259.4Z" fill="#00f500"/>
<path d="M924.7 238.1L924.3 243.2L920.0 240.8Z" fill="#00f500"/>
<path d="M856.4 376.1L851.8 370.1L858.0 369.2Z" fill="#00f500"/>
<path d="M868.5 350.6L874.9 347.7L875.3 353.8Z" fill="#00f500"/>
<path d="M739.3 330.8L733.6 329.7L737.4 325.8Z" fill="#00f500"/>
<path d="M660.1 253.8L664.8 252.4L662.9 255.9Z" fill="#00f500"/>
<path d="M597.5 402.6L597.4 410.2L594.2 405.5Z" fill="#00f500"/>
<path d="M600.5 197.6L601.2 193.6L603.3 195.9Z" fill="#00f500"/>
<path d="M884.3 183.6L880.1 191.4L877.1 185.3Z" fill="#00f500"/>
<path d="M876.7 391.7L873.7 390.0L875.9 388.5Z" fill="#00f500"/>
<path d="M653.5 357.7L651.2 361.7L650.1 358.9Z" fill="#00f500"/>
<path d="M674.8 201.9L666.9 206.8L668.2 199.3Z" fill="#00f500"/>
<path d="M849.7 370.3L844.8 371.8L846.3 368.9Z" fill="#00f500"/>
<path d="M694.4 262.9L701.5 265.5L695.9 269.4Z" fill="#00f500"/>
<path d="M609.6 273.9L608.2 278.3L605.1 274.8Z" fill="#00f500"/>
<path d="M837.6 280.8L833.6 274.1L839.3 276.2Z" fill="#00f500"/>
<path d="M636.9 373.3L639.1 366.4L641.1 371.7Z" fill="#00f500"/>
<path d="M878.4 260.8L870.1 254.7L878.4 253.3Z" fill="#00f500"/>
<path d="M942.0 277.1L945.6 281.8L941.8 281.5Z" fill="#00f500"/>
<path d="M670.0 291.6L676.5 300.8L668.6 298.6Z" fill="#00f500"/>
<path d="M865.2 367.3L869.1 366.2L867.8 369.8Z" fill="#00f500"/>
<path d="M616.5 323.0L613.7 332.1L609.2 326.5Z" fill="#00f500"/>
<path d="M744.2 187.0L749.9 181.3L752.7 187.5Z" fill="#00f500"/>
<path d="M884.0 239.1L878.3 232.3L884.2 231.3Z" fill="#00f500"/>
<path d="M625.0 394.1L623.5 397.9L621.2 395.6Z" fill="#00f500"/>
<path d="M696.3 403.2L699.0 408.0L695.1 406.3Z" fill="#00f500"/>
<path d="M702.1 252.8L701.2 249.9L704.1 250.2Z" fill="#00f500"/>
<path d="M526.5 289.1L523.1 293.3L523.0 289.0Z" fill="#00f500"/>
<path d="M948.9 255.9L947.3 259.6L946.4 256.9Z" fill="#00f500"/>
<path d="M923.2 376.5L918.6 382.8L916.2 377.7Z" fill="#00f500"/>
<path d="M855.1 198.8L853.3 194.3L857.3 194.3Z" fill="#00f500"/>
<path d="M875.8 340.2L872.2 343.2L873.0 339.5Z" fill="#00f500"/>
<path d="M816.3 275.0L819.3 275.8L817.0 277.8Z" fill="#00f500"/>
<path d="M533.8 221.5L540.0 229.6L532.6 227.5Z" fill="#00f500"/>
<path d="M747.7 353.1L743.3 347.3L748.4 347.1Z" fill="#00f500"/>
<path d="M548.9 237.9L548.5 232.1L551.8 234.2Z" fill="#00f500"/>
<path d="M520.8 264.0L524.9 273.0L518.4 269.0Z" fill="#00f500"/>
<path d="M701.3 192.4L707.6 183.5L707.1 191.9Z" fill="#00f500"/>
<path d="M772.5 165.1L765.5 167.0L768.6 161.8Z" fill="#00f500"/>
<path d="M612.5 196.6L608.7 201.0L606.9 196.2Z" fill="#00f500"/>
<path d="M780.0 221.1L777.5 226.1L774.6 221.7Z" fill="#00f500"/>
<path d="M799.4 188.1L795.5 177.5L802.1 180.7Z" fill="#00f500"/>
<path d="M533.5 294.1L532.7 300.1L528.0 296.8Z" fill="#00f500"/>
<path d="M942.5 301.3L948.2 304.9L943.5 305.8Z" fill="#00f500"/>
<path d="M711.0 331.2L706.0 323.1L713.1 322.1Z" fill="#00f500"/>
<path d="M613.9 169.4L609.1 163.3L614.8 161.2Z" fill="#00f500"/>
<path d="M651.8 353.5L655.4 346.1L656.9 352.6Z" fill="#00f500"/>
<path d="M849.7 348.9L847.8 354.4L845.2 350.9Z" fill="#00f500"/>
<path d="M514.9 300.5L522.1 297.2L522.1 304.3Z" fill="#00f500"/>
<path d="M581.3 359.7L579.5 366.4L576.7 361.7Z" fill="#00f500"/>
<path d="M815.7 328.7L808.2 326.5L813.7 321.2Z" fill="#00f500"/>
<path d="M527.3 365.5L525.3 359.6L530.7 361.5Z" fill="#00f500"/>
<path d="M634.5 172.6L630.3 173.6L631.1 170.0Z" fill="#00f500"/>
<path d="M518.4 398.6L522.5 404.5L516.6 403.5Z" fill="#00f500"/>
<path d="M947.6 302.9L942.3 302.3L945.4 299.4Z" fill="#00f500"/>
<path d="M835.6 210.1L838.8 206.3L840.5 211.1Z" fill="#00f500"/>
<path d="M853.1 388.0L848.3 383.9L852.4 383.4Z" fill="#00f500"/>
<path d="M560.5 259.0L551.8 259.3L554.4 252.8Z" fill="#00f500"/>
<path d="M833.3 389.3L837.7 394.0L832.7 393.7Z" fill="#00f500"/>
<path d="M937.8 293.0L934.5 287.4L939.6 287.1Z" fill="#00f500"/>
<path d="M920.9 296.6L911.8 298.2L916.1 291.9Z" fill="#00f500"/>
<path d="M829.7 184.1L822.9 181.5L827.6 177.9Z" fill="#00f500"/>
<path d="M869.1 305.0L868.2 299.1L872.0 301.6Z" fill="#00f500"/>
<path d="M537.0 334.9L532.9 332.7L535.8 329.9Z" fill="#00f500"/>
<path d="M769.9 275.4L766.7 269.1L773.7 269.4Z" fill="#00f500"/>
<path d="M656.2 176.1L654.4 167.1L661.3 169.9Z" fill="#00f500"/>
<path d="M657.0 416.9L661.5 418.2L658.6 421.4Z" fill="#00f500"/>
<path d="M941.9 408.6L939.0 405.3L942.0 405.5Z" fill="#00f500"/>
<path d="M782.0 256.2L786.6 249.3L789.8 255.5Z" fill="#00f500"/>
<path d="M806.1 410.3L803.2 407.3L806.1 406.2Z" fill="#00f500"/>
<path d="M773.4 361.0L775.0 364.5L772.5 364.0Z" fill="#00f500"/>
<path d="M528.3 365.3L528.9 359.2L532.2 363.2Z" fill="#00f500"/>
<path d="M668.5 305.1L676.3 305.7L671.6 310.0Z" fill="#00f500"/>
<path d="M807.0 403.5L807.8 409.4L803.5 407.2Z" fill="#00f500"/>
<path d="M846.1 306.2L844.7 313.1L841.1 308.3Z" fill="#00f500"/>
<path d="M676.2 329.3L679.0 325.9L680.5 330.1Z" fill="#00f500"/>
<path d="M550.2 347.4L554.9 352.5L549.0 352.5Z" fill="#00f500"/>
<path d="M675.1 303.1L675.7 308.6L672.3 306.1Z" fill="#00f500"/>
<path d="M621.5 280.1L611.1 276.2L617.6 272.5Z" fill="#00f500"/>
<path d="M632.5 397.9L625.4 400.7L628.5 395.9Z" fill="#00f500"/>
<path d="M557.9 384.4L551.6 383.0L556.3 379.7Z" fill="#00f500"/>
<path d="M902.2 276.7L905.8 273.8L905.0 277.0Z" fill="#00f500"/>
<path d="M808.5 377.0L809.1 382.2L804.9 379.8Z" fill="#00f500"/>
<path d="M659.9 174.7L658.1 180.7L653.9 177.1Z" fill="#00f500"/>
<path d="M897.2 384.3L899.7 376.7L904.0 381.2Z" fill="#00f500"/>
<path d="M912.3 327.1L920.4 321.7L918.1 328.8Z" fill="#00f500"/>
<path d="M726.9 189.6L731.7 190.9L728.7 193.2Z" fill="#00f500"/>
<path d="M560.7 366.6L561.8 363.5L563.7 365.7Z" fill="#00f500"/>
<path d="M749.6 250.7L752.0 260.4L746.3 255.2Z" fill="#00f500"/>
</g>
<g clip-path="url(#zew)"><rect x="300" y="150" width="670" height="560" fill="#f00" filter="url(#few)"/></g>
<path d="M417.6 267.3 L437.3 259.4 L464.7 273.1 L484.3 292.7 L488.2 304.5 L468.6 316.3 L449 324.1 L445.1 347.6 L433.3 359.4 L421.6 347.6 L417.6 328 L425.5 316.3 L405.9 308.4 L398 300.6 L409.8 288.8Z" fill="#00f500"/>
<path d="M388.2 261.4 L402 259.4 L417.6 273.1 L409.8 296.7 L421.6 308.4 L425.5 320.2 L402 320.2 L394.1 308.4 L390.2 288.8Z" fill="#ff0000"/>
<path d="M465.1 285 L489.5 285 L489.5 290.4 L481.4 302.6Z" fill="#ff0000"/>
<path d="M447.6 321.5 L480 299.9 L481.4 324.2Z" fill="#98f000"/>
<path d="M444.9 325.5 L447.6 322.2 L481.4 324.2 L467.8 340.4 L451.6 352.6 L446.2 344.5Z" fill="#ffff00"/>
<path d="M451.6 352.6 L462.4 341.8 L474.6 352.6Z" fill="#ff0000"/>
<path d="M480 299.9 L489.5 290.4 L497.6 312 L498.9 324.2 L481.4 324.2Z" fill="#ff8c00"/>
<path d="M480 330.9 L481.4 324.2 L498.9 324.2 L501.6 339.1 L489.5 345.8Z" fill="#ffff00"/>
<path d="M480 333.6 L489.5 345.8 L484.1 348.5Z" fill="#ff0000"/>
<path d="M501.6 333.6 L516.5 329.6 L523.2 349.9 L500.3 353.9Z" fill="#ffff00"/>
<path d="M500.3 353.9 L521.9 349.9 L523.2 360.7Z" fill="#ff8c00"/>
<path d="M493.5 360.7 L500.3 355.3 L505.7 368.8 L494.9 371.5Z" fill="#ff8c00"/>
<path d="M440.8 358 L446.2 356.6 L448.9 371.5 L443.5 371.5Z" fill="#ff8c00"/>
<path d="M317.5 310 L337.5 297.5 L345 315 L325 317.5Z" fill="#98f000"/>
<path d="M337.5 295 L347.5 291.2 L355 315 L345 315Z" fill="#ffff00"/>
<path d="M322.5 317.5 L335 320 L337.5 340 L325 337.5Z" fill="#ffff00"/>
<path d="M332.5 322.5 L345 335 L337.5 342.5Z" fill="#ff8c00"/>
<path d="M392.5 257.5 L410 250 L415 267.5 L400 267.5Z" fill="#ffff00"/>
<path d="M410 248.8 L420 250 L420 262.5 L415 267.5Z" fill="#ff8c00"/>
<path d="M360 272.5 L370 271.2 L368.8 280Z" fill="#98f000"/>
<path d="M394.1 304.5 L425.5 308.4 L427.5 318.2 L405.9 322.2 L396.1 314.3Z" fill="#ff8c00"/>
<path d="M373.8 292.5 L385 295 L390 307.5 L380 310Z" fill="#ff8c00"/>
<path d="M475 392.5 L485 395 L485 407.5 L477.5 405Z" fill="#ff8c00"/>
<path d="M482.5 397.5 L495 400 L490 410Z" fill="#ffff00"/>
<path d="M442.2 357.3 L448.6 359.5 L449.7 372.4 L442.2 371.4Z" fill="#ff8c00"/>
<path d="M480 391.9 L489.7 393 L496.2 402.7 L485.4 407Z" fill="#ff8c00"/>
<path d="M486.5 395.1 L491.9 394.1 L486.5 408.1 L482.2 404.9Z" fill="#ffff00"/>
<path d="M643.2 450.3 L648.6 449.2 L650.8 463.2 L646.5 464.3Z" fill="#ff8c00"/>
<path d="M650.8 463.2 L662.7 461.1 L662.7 478.4 L653 478.4Z" fill="#ff8c00"/>
<path d="M659.5 461.1 L663.8 460 L662.7 471.9Z" fill="#ffff00"/>
<path d="M656.2 447 L660.5 447 L661.6 461.1 L657.3 461.1Z" fill="#ff8c00"/>
<path d="M666 456.5 L690.3 451.6 L714.6 461.4 L717 471 L690.3 478.4 L666 478.4Z" fill="#00f500"/>
<path d="M466 632 L497 628 L505 640 L512 660 L505 675 L494 691 L481 703 L478 660Z" fill="#00f500"/>
<path d="M468 631 L497 628 L498 638 L472 643Z" fill="#ff8c00"/>
<path d="M468 638 L478 636 L480 645 L470 646Z" fill="#ffff00"/>
<path d="M879.7 169.3 L887.8 180.7 L897.5 183.9 L908.9 188.8 L923.5 187.5 L913.7 198.5 L904 203.3 L897.5 209.8 L891 222.8 L887.8 229.3 L886.2 216.3 L894.3 198.5 L886.2 190.4 L879.7 185.5Z" fill="#00f500"/>
<path d="M814.4 393.3 L834.6 389.3 L834.6 409.5 L818.4 413.6Z" fill="#00f500"/>
<path d="M869.1 424.9 L872.3 424.3 L875.4 423.5 L878.5 422.7 L881.5 421.6 L884.8 421.3 L888.2 421.3 L891.2 420.3 L894.8 419.3 L897.3 416.7 L900.6 415.4 L903.8 414.1 L906.9 412.6 L909.9 410.9 L912.7 408.7 L915.6 406.8 L918.9 405.5 L921.4 402.8 L924.4 401 L927 398.6 L930.3 396 L934.7 396 L939.6 399 L940.4 402.4 L940.6 405.7 L940.6 409.1 L939.7 412.5 L940.6 415.8 L939.3 421.3 L936.2 422.8 L932.7 423.5 L929.3 424.3 L925.9 425.1 L923.2 427 L920.4 428.6 L917.7 430.4 L914.4 431 L911 431.5 L908.5 433.7 L906 435.8 L903.5 437.8 L901.1 439.7 L898.4 441.1 L895.6 442.2 L893.2 444.1 L890.6 445.7 L887.9 447.1 L885.2 448.4 L880.6 449.7 L877.8 447.5 L874.7 445.9 L871.5 444.6 L868.3 443.2 L865.2 441.6 L865 438.1 L866.7 435.1 L868.2 432 L869.9 428.9 L869.2 425.3Z" fill="#00f500"/>
<path d="M816.8 395.6 L820.1 394 L823.4 392.4 L827.2 390.4 L829.7 393.3 L833.1 395.3 L837.2 399.4 L836.6 402.4 L836.1 405.5 L835.6 408.5 L833.1 413.5 L830.1 414 L827.1 414.5 L824 415 L818.9 414.9 L815.9 411.8 L813 406.9 L813.8 403.9 L813.5 400.7 L813.6 397.6 L816.5 394.9Z" fill="#00f500"/>
<path d="M820.5 439.1 L824 437.8 L827.3 436 L831 435.8 L834.6 435.9 L837.6 437.8 L840.7 439.8 L844.3 441 L848.5 444 L847.9 448.1 L844.9 454.1 L841.9 453.3 L838.8 454.1 L835.8 454.1 L832.8 453 L829.7 452.9 L824.8 452.6 L823.4 449.5 L821.5 446.7 L820 443.6 L820.6 439.5Z" fill="#00f500"/>
<path d="M921.5 371.6 L924.1 373.9 L927 375.8 L930.3 376.8 L933.5 378 L936.9 378.8 L939.6 380.9 L942.6 382.5 L944.2 382.7 L944.6 385.8 L945.3 388.8 L944.5 391.8 L945.7 392.6 L941.7 393.6 L939.3 394.7 L936.2 393.2 L933.2 391.7 L929.8 390.8 L927.8 390.6 L926.7 387.2 L925 384.1 L923.2 380.9 L922 377.6 L920.8 374.4 L922 370.6Z" fill="#00f500"/>
<path d="M875.4 391.3 L878.8 391.4 L881.9 390.2 L885.2 390.1 L888.3 389.1 L891.3 388.1 L892.4 386.5 L895.5 388 L898.5 389.5 L901.7 390.9 L899 393.5 L895.8 395.3 L892.2 396.5 L889.3 397.6 L886.3 398.2 L883.2 398.3 L880 398.1 L878.8 400.7 L878.5 397.3 L878.3 393.8 L875.3 390.9Z" fill="#00f500"/>
<path d="M512.6 628.2 L511.2 630.9 L510.4 633.8 L509.7 636.7 L508.5 639.5 L507.6 642.4 L506.9 645.5 L504.8 648.2 L502.9 651 L501.7 654.3 L500 657.2 L498.4 660.2 L496.2 662.8 L494.3 665.6 L493.1 668.8 L492 672" fill="none" stroke="#ff0000" stroke-width="3" stroke-linejoin="round" stroke-linecap="round"/>
<path d="M519.1 629.7 L518.8 632.9 L518 636 L516.5 638.8 L516.1 642 L515.2 645.1 L515 648.5 L513.1 651.5 L511 654.5 L509.3 657.6 L507 660.5 L506 664" fill="none" stroke="#ff0000" stroke-width="3" stroke-linejoin="round" stroke-linecap="round"/>
<path d="M877.6 428 L881.1 427.4 L884.3 426.1 L887.3 424.2 L890.8 423.6 L893.9 422 L897.4 421.5 L900.9 421.1 L904.1 419.7 L907.2 418.2 L910.6 417.5 L913.6 416.4 L916.4 414.7 L919.2 412.8 L922 411.1" fill="none" stroke="#ff0000" stroke-width="3" stroke-linejoin="round" stroke-linecap="round"/>
<path d="M472.4 404.9 L496.2 415.7 L517.8 426.5 L539.5 435.1 L561.1 443.8 L582.7 448.1 L604.3 452.4" fill="none" stroke="#00f500" stroke-width="5" stroke-linejoin="round" stroke-linecap="round" stroke-dasharray="none"/>
<path d="M600 466 L620 475 L640 470 L666 466" fill="none" stroke="#00f500" stroke-width="6" stroke-linejoin="round" stroke-linecap="round" stroke-dasharray="none"/>
<path d="M534.3 565.8 L535.4 562.6 L537.5 560.2 L538.5 557 L540.4 554.4 L541.9 551.6 L543.6 548.8 L545.4 546.2 L547.2 543.6 L549.1 540.9 L550.9 538.3 L552.7 535.7 L554.5 533 L557 530.9 L558.2 527.8 L560 525.3 L562.1 522.8 L564.8 520.9 L566.8 518.4 L568.4 515.7 L571.1 513.7 L572.1 510.5 L574.6 508.4 L576 505.5 L577.2 502.5 L578.3 499.4 L580.1 496.8 L582.5 494.6 L583.9 491.4 L586.1 489.1 L588.5 486.9 L590.3 484.3 L592.5 481.9 L594.3 479.3 L596.4 476.9 L600.3 476" fill="none" stroke="#00f500" stroke-width="5" stroke-linejoin="round" stroke-linecap="round" stroke-dasharray="none"/>
<path d="M569.7 469.7 L591.4 461.1 L613 461.1 L630.3 469.7" fill="none" stroke="#00f500" stroke-width="4" stroke-linejoin="round" stroke-linecap="round" stroke-dasharray="none"/>
<path d="M678 261.7 L647 297.4 L625 337 L602 372.6" fill="none" stroke="#00f500" stroke-width="3.5" stroke-linejoin="round" stroke-linecap="round" stroke-dasharray="18 6 9 5"/>
<path d="M785 234.6 L767.5 283.6 L749.6 328 L736.3 364 L723 400" fill="none" stroke="#00f500" stroke-width="3" stroke-linejoin="round" stroke-linecap="round" stroke-dasharray="18 6 9 5"/>
<path d="M887.8 185.7 L870 239.2 L856.6 283.8 L838.8 337.3 L821 400" fill="none" stroke="#00f500" stroke-width="3.5" stroke-linejoin="round" stroke-linecap="round" stroke-dasharray="18 6 9 5"/>
<path d="M941 194.6 L919 261.5 L901 306" fill="none" stroke="#00f500" stroke-width="3" stroke-linejoin="round" stroke-linecap="round" stroke-dasharray="18 6 9 5"/>
<path d="M633.7 252.6 L602.5 297.4 L571.3 337.3" fill="none" stroke="#00f500" stroke-width="2.5" stroke-linejoin="round" stroke-linecap="round" stroke-dasharray="18 6 9 5"/>
<path d="M720 250 L700 300 L685 345 L670 390" fill="none" stroke="#00f500" stroke-width="2" stroke-linejoin="round" stroke-linecap="round" stroke-dasharray="18 6 9 5"/>
</g>
<path d="M315.4 313.3 L316.8 308.2 L335.0 301.0 L343.9 291.4 L350.4 287.7 L351.2 280.4 L346.5 276.0 L349.7 273.0 L361.4 270.2 L370.2 270.6 L375.3 272.4 L381.9 265.8 L393.6 257.8 L399.4 251.2 L411.0 247.5 L418.4 246.0 L434.5 246.4 L442.5 257.0 L449.0 256.3 L457.9 254.0 L466.7 257.8 L481.3 252.0 L487.0 253.4 L490.0 256.5 L498.8 255.8 L514.9 252.2 L520.7 247.0 L533.9 244.9 L535.3 241.6 L545.6 241.6 L548.5 243.4 L550.7 247.0 L554.3 241.9 L558.7 240.2 L574.8 241.2 L583.6 247.0 L592.3 250.7 L607.0 247.0 L621.6 240.5 L639.1 237.5 L659.6 239.0 L664.0 242.7 L665.4 252.2 L672.7 260.9 L680.0 257.3 L694.6 253.5 L704.3 253.8 L710.0 249.2 L716.5 247.3 L722.2 236.8 L731.9 235.1 L740.8 239.2 L751.3 238.4 L765.9 234.3 L774.0 239.2 L784.6 240.0 L793.5 226.2 L809.7 200.3 L814.0 177.4 L821.3 175.0 L823.8 163.6 L830.3 156.3 L842.4 155.5 L848.9 159.6 L857.0 157.2 L863.5 159.6 L868.3 165.3 L879.7 170.1 L884.6 179.0 L894.3 183.9 L907.2 188.8 L923.5 188.0 L941.3 184.4 L952.6 185.5 L954.2 199.3 L951.8 216.3 L946.1 224.4 L947.0 242.2 L945.3 265.0 L941.5 279.5 L934.2 301.4 L936.6 323.3 L937.9 342.7 L942.7 362.2 L946.4 381.7 L945.2 396.3 L939.0 403.6 L940.3 418.2 L944.0 420.6 L943.0 426.9 L940.7 433.8 L937.3 444.1 L928.1 445.3 L924.6 463.6 L921.2 472.8 L916.6 486.6 L905.1 487.7 L892.5 495.8 L884.5 499.2 L879.9 495.8 L867.2 496.9 L858.1 500.3 L851.2 507.2 L848.9 514.1 L840.8 523.3 L836.2 531.3 L812.1 537.1 L808.7 550.9 L797.2 569.2 L795.1 578.6 L788.6 577.8 L780.5 571.3 L775.7 565.7 L769.2 567.3 L754.6 564.9 L740.0 565.7 L739.2 551.9 L730.3 538.1 L725.4 534.9 L715.7 540.5 L707.6 543.0 L697.8 542.5 L692.2 551.1 L682.4 552.7 L680.8 566.5 L675.9 566.5 L668.6 564.9 L663.8 561.6 L654.0 568.1 L648.4 573.8 L641.1 568.1 L628.9 574.6 L625.7 584.3 L620.0 590.8 L613.3 604.1 L611.4 620.2 L605.8 621.1 L588.7 619.2 L583.0 617.3 L558.4 622.1 L545.2 628.7 L535.7 638.1 L526.3 645.7 L522.5 657.1 L511.1 664.6 L503.5 674.1 L494.1 691.1 L480.8 703.4 L480.8 687.4 L483.7 662.7 L477.0 651.4 L472.3 647.6 L467.4 643.1 L455.2 633.4 L443.0 630.9 L430.9 638.2 L422.3 646.7 L412.6 638.2 L401.6 623.6 L399.2 604.1 L401.6 589.5 L410.2 577.4 L410.2 560.3 L405.3 556.7 L395.6 550.6 L391.9 543.3 L394.3 536.0 L388.3 523.8 L381.0 514.1 L378.5 504.3 L369.5 499.5 L366.8 494.7 L361.4 496.8 L358.6 502.8 L350.5 504.2 L343.8 508.2 L338.4 506.2 L338.4 499.5 L330.3 498.1 L319.5 494.0 L318.8 486.0 L319.5 476.5 L313.4 469.7 L312.7 464.3 L318.1 457.6 L320.1 450.8 L322.2 440.0 L324.1 419.1 L325.5 405.0 L328.4 397.9 L327.0 393.6 L344.0 390.8 L346.8 379.4 L336.9 365.2 L321.3 356.7 L322.7 331.2Z" fill="none" stroke="#000" stroke-width="1.3"/>
</svg>
<!-- MAP_END -->

<!-- MAPCHROME_START -->
<!-- map v-scrollbar -->
<div class="a" style="left:1054px;top:128px;width:2px;height:603px;background:#f2f2f2"></div>
<div class="a" style="left:1056px;top:126px;width:16px;height:2px;background:#6a6a6a"></div>
<div class="a" style="left:1056px;top:128px;width:16px;height:601px;background:#ececec;border-right:1px solid #e0e0e0"></div>
<svg class="a" style="left:1060px;top:135px" width="7" height="4"><path d="M0 4H7L3.5 0Z" fill="#3a3a3a"/></svg>
<div class="a" style="left:1056px;top:470px;width:14px;height:208px;background:linear-gradient(90deg,#e2e2e2,#d4d4d4);border:1px solid #bcbcbc;border-radius:2px"></div>
<div class="a" style="left:1060px;top:571px;width:6px;height:5px;border-top:1px solid #777;border-bottom:1px solid #777"></div><div class="a" style="left:1060px;top:573px;width:6px;height:1px;background:#777"></div>
<svg class="a" style="left:1060px;top:720px" width="7" height="4"><path d="M0 0H7L3.5 4Z" fill="#3a3a3a"/></svg>
<!-- bottom bar -->
<div class="a" style="left:210px;top:731px;width:862px;height:9px;background:#f0f0f0;border-top:1px solid #e2e2e2"></div>
<div class="a" style="left:212px;top:732px;width:17px;height:8px;background:#dcdcdc;border:1px solid #8a8a8a;border-bottom:none"></div>
<div class="a" style="left:215px;top:734px;width:10px;height:6px;background:linear-gradient(135deg,#e8d050,#60b050)"></div>
<div class="a" style="left:233px;top:734px;width:8px;height:6px;background:#fff;border:1px solid #333;border-bottom:none"></div>
<div class="a" style="left:248px;top:733px;width:1px;height:7px;background:#a0a0a0"></div>
<div class="a" style="left:258px;top:735px;width:8px;height:6px;border:2px solid #1a5ab0;border-bottom:none;border-radius:4px 4px 0 0"></div>
<div class="a" style="left:276px;top:735px;width:2px;height:5px;background:#1a5ab0"></div><div class="a" style="left:281px;top:735px;width:2px;height:5px;background:#1a5ab0"></div>
<div class="a" style="left:288px;top:732px;width:18px;height:8px;background:#e4e4e4"></div>
<svg class="a" style="left:294px;top:735px" width="5" height="5"><path d="M5 0V5L0 5Z" fill="#222"/></svg>
<div class="a" style="left:306px;top:732px;width:740px;height:8px;background:#f2f2f2"></div>
<div class="a" style="left:397px;top:733px;width:207px;height:7px;background:linear-gradient(#e2e2e2,#d8d8d8);border:1px solid #bcbcbc;border-bottom:none;border-radius:2px 2px 0 0"></div>
<div class="a" style="left:498px;top:736px;width:1px;height:4px;background:#555;box-shadow:2px 0 0 #555,4px 0 0 #555"></div>
<svg class="a" style="left:1044px;top:735px" width="5" height="5"><path d="M0 0V5L5 5Z" fill="#222"/></svg>

<!-- MAPCHROME_END -->
<!-- ArcToolbox -->
<div class="a" style="left:1072px;top:126px;width:5px;height:614px;background:#f7f7f7"></div>
<div class="hdr" style="left:1077px;top:126px;width:270px"><span class="t" style="left:4px">ArcToolbox</span></div>
<div class="a" style="left:1077px;top:146px;width:270px;height:594px;background:#fff;border:1px solid #828790;border-bottom:none"></div>
<div class="a" style="left:1347px;top:126px;width:21px;height:614px;background:#f7f7f7"></div>

<!-- TOOLBOX_START -->
<svg width="0" height="0" style="position:absolute">
<defs>
<symbol id="tbx" viewBox="0 0 17 16">
 <path d="M1 6L8 3L16 6V13L9 16L1 13Z" fill="#b8301e"/>
 <path d="M1 6L8 3L16 6L9 9Z" fill="#e06a50"/>
 <path d="M9 9L16 6V13L9 16Z" fill="#8a2010"/>
 <path d="M1 9.5L9 12.5L16 9.5" fill="none" stroke="#5a1a10" stroke-width="0.8"/>
 <path d="M5.5 4.5V2Q5.5 0.8 7 0.8H10Q11.5 0.8 11.5 2V4.5" fill="none" stroke="#333" stroke-width="1.3"/>
 <rect x="7" y="8.5" width="2" height="3" fill="#333"/>
</symbol>
<symbol id="tbxb" viewBox="0 0 17 16">
 <use href="#tbx" width="17" height="16"/>
 <path d="M2 7Q6 5 8 8L5 10Q8 11 6 15Q2 15 1 12Q4 11 2 9Z" fill="#4a9ae8" stroke="#fff" stroke-width="0.6"/>
 <path d="M6 5L10 6L8 9Z" fill="#6ab4f4"/>
</symbol>
<symbol id="tset" viewBox="0 0 17 16">
 <path d="M1 8L9 11L16 8V12L9 15.5L1 12Z" fill="#c0301c"/>
 <path d="M9 11L16 8V12L9 15.5Z" fill="#8a1e10"/>
 <path d="M1 5L7 2L16 6L9 9.5L1 8Z" fill="#9a9a9a" stroke="#333" stroke-width="0.8"/>
 <path d="M4 3.5L14 9" stroke="#e8e0c8" stroke-width="2"/>
 <path d="M3 2L7 0.5L9 2L5 4Z" fill="#333"/>
</symbol>
<symbol id="hammer" viewBox="0 0 16 16">
 <path d="M5.5 5L14 14.5" stroke="#5a5040" stroke-width="3" stroke-linecap="round"/>
 <path d="M5.5 5L14 14.5" stroke="#e8dcc0" stroke-width="1.6" stroke-linecap="round"/>
 <path d="M0.5 5.5Q1 2 5 1L8.5 0.5L10 2.5L7.5 5L5.5 7Z" fill="#3a3a3a"/>
 <path d="M2 4Q3 2.5 6 2" stroke="#aaa" stroke-width="0.8" fill="none"/>
</symbol>
</defs></svg>
<div class="pm p" style="left:1086px;top:154px"></div>
<svg class="a" style="left:1101px;top:148px" width="17" height="16"><use href="#tbx"/></svg>
<span class="t" style="left:1122px;top:150px">Linear Referencing Tools</span>
<div class="pm p" style="left:1086px;top:172px"></div>
<svg class="a" style="left:1101px;top:166px" width="17" height="16"><use href="#tbx"/></svg>
<span class="t" style="left:1122px;top:168px">Multidimension Tools</span>
<div class="pm p" style="left:1086px;top:190px"></div>
<svg class="a" style="left:1101px;top:184px" width="17" height="16"><use href="#tbx"/></svg>
<span class="t" style="left:1122px;top:186px">NDNR Hydraulics</span>
<div class="pm p" style="left:1086px;top:208px"></div>
<svg class="a" style="left:1101px;top:202px" width="17" height="16"><use href="#tbx"/></svg>
<span class="t" style="left:1122px;top:204px">NDNR Hydrology</span>
<div class="pm p" style="left:1086px;top:226px"></div>
<svg class="a" style="left:1101px;top:220px" width="17" height="16"><use href="#tbx"/></svg>
<span class="t" style="left:1122px;top:222px">Network Analyst Tools</span>
<div class="pm p" style="left:1086px;top:244px"></div>
<svg class="a" style="left:1101px;top:238px" width="17" height="16"><use href="#tbx"/></svg>
<span class="t" style="left:1122px;top:240px">Parcel Fabric Tools</span>
<div class="pm p" style="left:1086px;top:262px"></div>
<svg class="a" style="left:1101px;top:256px" width="17" height="16"><use href="#tbxb"/></svg>
<span class="t" style="left:1122px;top:258px">RAPID</span>
<div class="pm p" style="left:1086px;top:280px"></div>
<svg class="a" style="left:1101px;top:274px" width="17" height="16"><use href="#tbx"/></svg>
<span class="t" style="left:1122px;top:276px">Schematics Tools</span>
<div class="pm p" style="left:1086px;top:298px"></div>
<svg class="a" style="left:1101px;top:292px" width="17" height="16"><use href="#tbx"/></svg>
<span class="t" style="left:1122px;top:294px">Server Tools</span>
<div class="pm p" style="left:1086px;top:316px"></div>
<svg class="a" style="left:1101px;top:310px" width="17" height="16"><use href="#tbxb"/></svg>
<span class="t" style="left:1122px;top:312px">Space Time Pattern Mining Tools</span>
<div class="pm" style="left:1086px;top:334px"></div>
<svg class="a" style="left:1101px;top:328px" width="17" height="16"><use href="#tbx"/></svg>
<span class="t" style="left:1122px;top:330px">Spatial Analyst Tools</span>
<div class="pm p" style="left:1105px;top:352px"></div>
<svg class="a" style="left:1120px;top:346px" width="17" height="16"><use href="#tset"/></svg>
<span class="t" style="left:1141px;top:348px">Conditional</span>
<div class="pm p" style="left:1105px;top:370px"></div>
<svg class="a" style="left:1120px;top:364px" width="17" height="16"><use href="#tset"/></svg>
<span class="t" style="left:1141px;top:366px">Density</span>
<div class="pm p" style="left:1105px;top:388px"></div>
<svg class="a" style="left:1120px;top:382px" width="17" height="16"><use href="#tset"/></svg>
<span class="t" style="left:1141px;top:384px">Distance</span>
<div class="pm p" style="left:1105px;top:406px"></div>
<svg class="a" style="left:1120px;top:400px" width="17" height="16"><use href="#tset"/></svg>
<span class="t" style="left:1141px;top:402px">Extraction</span>
<div class="pm p" style="left:1105px;top:424px"></div>
<svg class="a" style="left:1120px;top:418px" width="17" height="16"><use href="#tset"/></svg>
<span class="t" style="left:1141px;top:420px">Generalization</span>
<div class="pm p" style="left:1105px;top:442px"></div>
<svg class="a" style="left:1120px;top:436px" width="17" height="16"><use href="#tset"/></svg>
<span class="t" style="left:1141px;top:438px">Groundwater</span>
<div class="pm p" style="left:1105px;top:460px"></div>
<svg class="a" style="left:1120px;top:454px" width="17" height="16"><use href="#tset"/></svg>
<span class="t" style="left:1141px;top:456px">Hydrology</span>
<div class="pm p" style="left:1105px;top:478px"></div>
<svg class="a" style="left:1120px;top:472px" width="17" height="16"><use href="#tset"/></svg>
<span class="t" style="left:1141px;top:474px">Interpolation</span>
<div class="pm p" style="left:1105px;top:496px"></div>
<svg class="a" style="left:1120px;top:490px" width="17" height="16"><use href="#tset"/></svg>
<span class="t" style="left:1141px;top:492px">Local</span>
<div class="pm p" style="left:1105px;top:514px"></div>
<svg class="a" style="left:1120px;top:508px" width="17" height="16"><use href="#tset"/></svg>
<span class="t" style="left:1141px;top:510px">Map Algebra</span>
<div class="pm p" style="left:1105px;top:532px"></div>
<svg class="a" style="left:1120px;top:526px" width="17" height="16"><use href="#tset"/></svg>
<span class="t" style="left:1141px;top:528px">Math</span>
<div class="pm p" style="left:1105px;top:550px"></div>
<svg class="a" style="left:1120px;top:544px" width="17" height="16"><use href="#tset"/></svg>
<span class="t" style="left:1141px;top:546px">Multivariate</span>
<div class="pm p" style="left:1105px;top:568px"></div>
<svg class="a" style="left:1120px;top:562px" width="17" height="16"><use href="#tset"/></svg>
<span class="t" style="left:1141px;top:564px">Neighborhood</span>
<div class="pm p" style="left:1105px;top:586px"></div>
<svg class="a" style="left:1120px;top:580px" width="17" height="16"><use href="#tset"/></svg>
<span class="t" style="left:1141px;top:582px">Overlay</span>
<div class="pm p" style="left:1105px;top:604px"></div>
<svg class="a" style="left:1120px;top:598px" width="17" height="16"><use href="#tset"/></svg>
<span class="t" style="left:1141px;top:600px">Raster Creation</span>
<div class="pm" style="left:1105px;top:622px"></div>
<svg class="a" style="left:1120px;top:616px" width="17" height="16"><use href="#tset"/></svg>
<span class="t" style="left:1141px;top:618px">Reclass</span>
<svg class="a" style="left:1139px;top:635px" width="16" height="16"><use href="#hammer"/></svg>
<span class="t" style="left:1160px;top:636px">Lookup</span>
<svg class="a" style="left:1139px;top:653px" width="16" height="16"><use href="#hammer"/></svg>
<span class="t" style="left:1160px;top:654px">Reclass by ASCII File</span>
<svg class="a" style="left:1139px;top:671px" width="16" height="16"><use href="#hammer"/></svg>
<span class="t" style="left:1160px;top:672px">Reclass by Table</span>
<div class="a" style="left:1158px;top:689px;width:55px;height:18px;background:#ebebeb"></div>
<svg class="a" style="left:1139px;top:689px" width="16" height="16"><use href="#hammer"/></svg>
<span class="t" style="left:1160px;top:690px">Reclassify</span>
<svg class="a" style="left:1139px;top:707px" width="16" height="16"><use href="#hammer"/></svg>
<span class="t" style="left:1160px;top:708px">Rescale by Function</span>
<svg class="a" style="left:1139px;top:725px" width="16" height="16"><use href="#hammer"/></svg>
<span class="t" style="left:1160px;top:726px">Slice</span>
<div class="a" style="left:1329px;top:147px;width:17px;height:593px;background:#f0f0f0;border-left:1px solid #e8e8e8"></div>
<svg class="a" style="left:1334px;top:155px" width="7" height="4"><path d="M0 4H7L3.5 0Z" fill="#404040"/></svg>
<div class="a" style="left:1330px;top:331px;width:15px;height:335px;background:linear-gradient(90deg,#e4e4e4,#d6d6d6);border:1px solid #c4c4c4;border-radius:2px"></div>
<div class="a" style="left:1334px;top:495px;width:7px;height:5px;border-top:1px solid #777;border-bottom:1px solid #777"></div><div class="a" style="left:1334px;top:497px;width:7px;height:1px;background:#777"></div>
<svg class="a" style="left:1334px;top:735px" width="7" height="4"><path d="M0 0H7L3.5 4Z" fill="#404040"/></svg>
<svg class="a" style="left:178px;top:131px" width="9" height="10" viewBox="0 0 9 10"><path d="M1.5 0.8H7.5M2.5 0.8V6M6.5 0.8V6M0.5 6H8.5M4.5 6V9.5" fill="none" stroke="#2a3038" stroke-width="1.4"/></svg>
<svg class="a" style="left:192px;top:132px" width="9" height="9" viewBox="0 0 9 9"><path d="M0.8 0.8L8.2 8.2M8.2 0.8L0.8 8.2" stroke="#2a3038" stroke-width="1.5"/></svg>
<svg class="a" style="left:1319px;top:131px" width="9" height="10" viewBox="0 0 9 10"><path d="M1.5 0.8H7.5M2.5 0.8V6M6.5 0.8V6M0.5 6H8.5M4.5 6V9.5" fill="none" stroke="#2a3038" stroke-width="1.4"/></svg>
<svg class="a" style="left:1333px;top:132px" width="9" height="9" viewBox="0 0 9 9"><path d="M0.8 0.8L8.2 8.2M8.2 0.8L0.8 8.2" stroke="#2a3038" stroke-width="1.5"/></svg>
<div class="a" style="left:1349px;top:128px;width:19px;height:72px;background:linear-gradient(90deg,#f8f8f8,#e8eef4);border:1px solid #9aa6b2;border-right:none;border-radius:3px 0 0 3px"></div>
<svg class="a" style="left:1351px;top:131px" width="16" height="16" viewBox="0 0 16 16"><rect x="0.5" y="0.5" width="15" height="13" fill="#fff" stroke="#444"/><rect x="1" y="1" width="14" height="2" fill="#2a6ad0"/><rect x="6" y="4" width="9" height="11" fill="#e8c020" stroke="#7a6010"/><path d="M1 14L6 10L9 15Z" fill="#3a80c0"/></svg>
<span class="t" style="left:1352px;top:153px;writing-mode:vertical-rl;color:#5a5a5a;font-size:12px">Catalog</span>
<!-- TOOLBOX_END -->
</body></html>
